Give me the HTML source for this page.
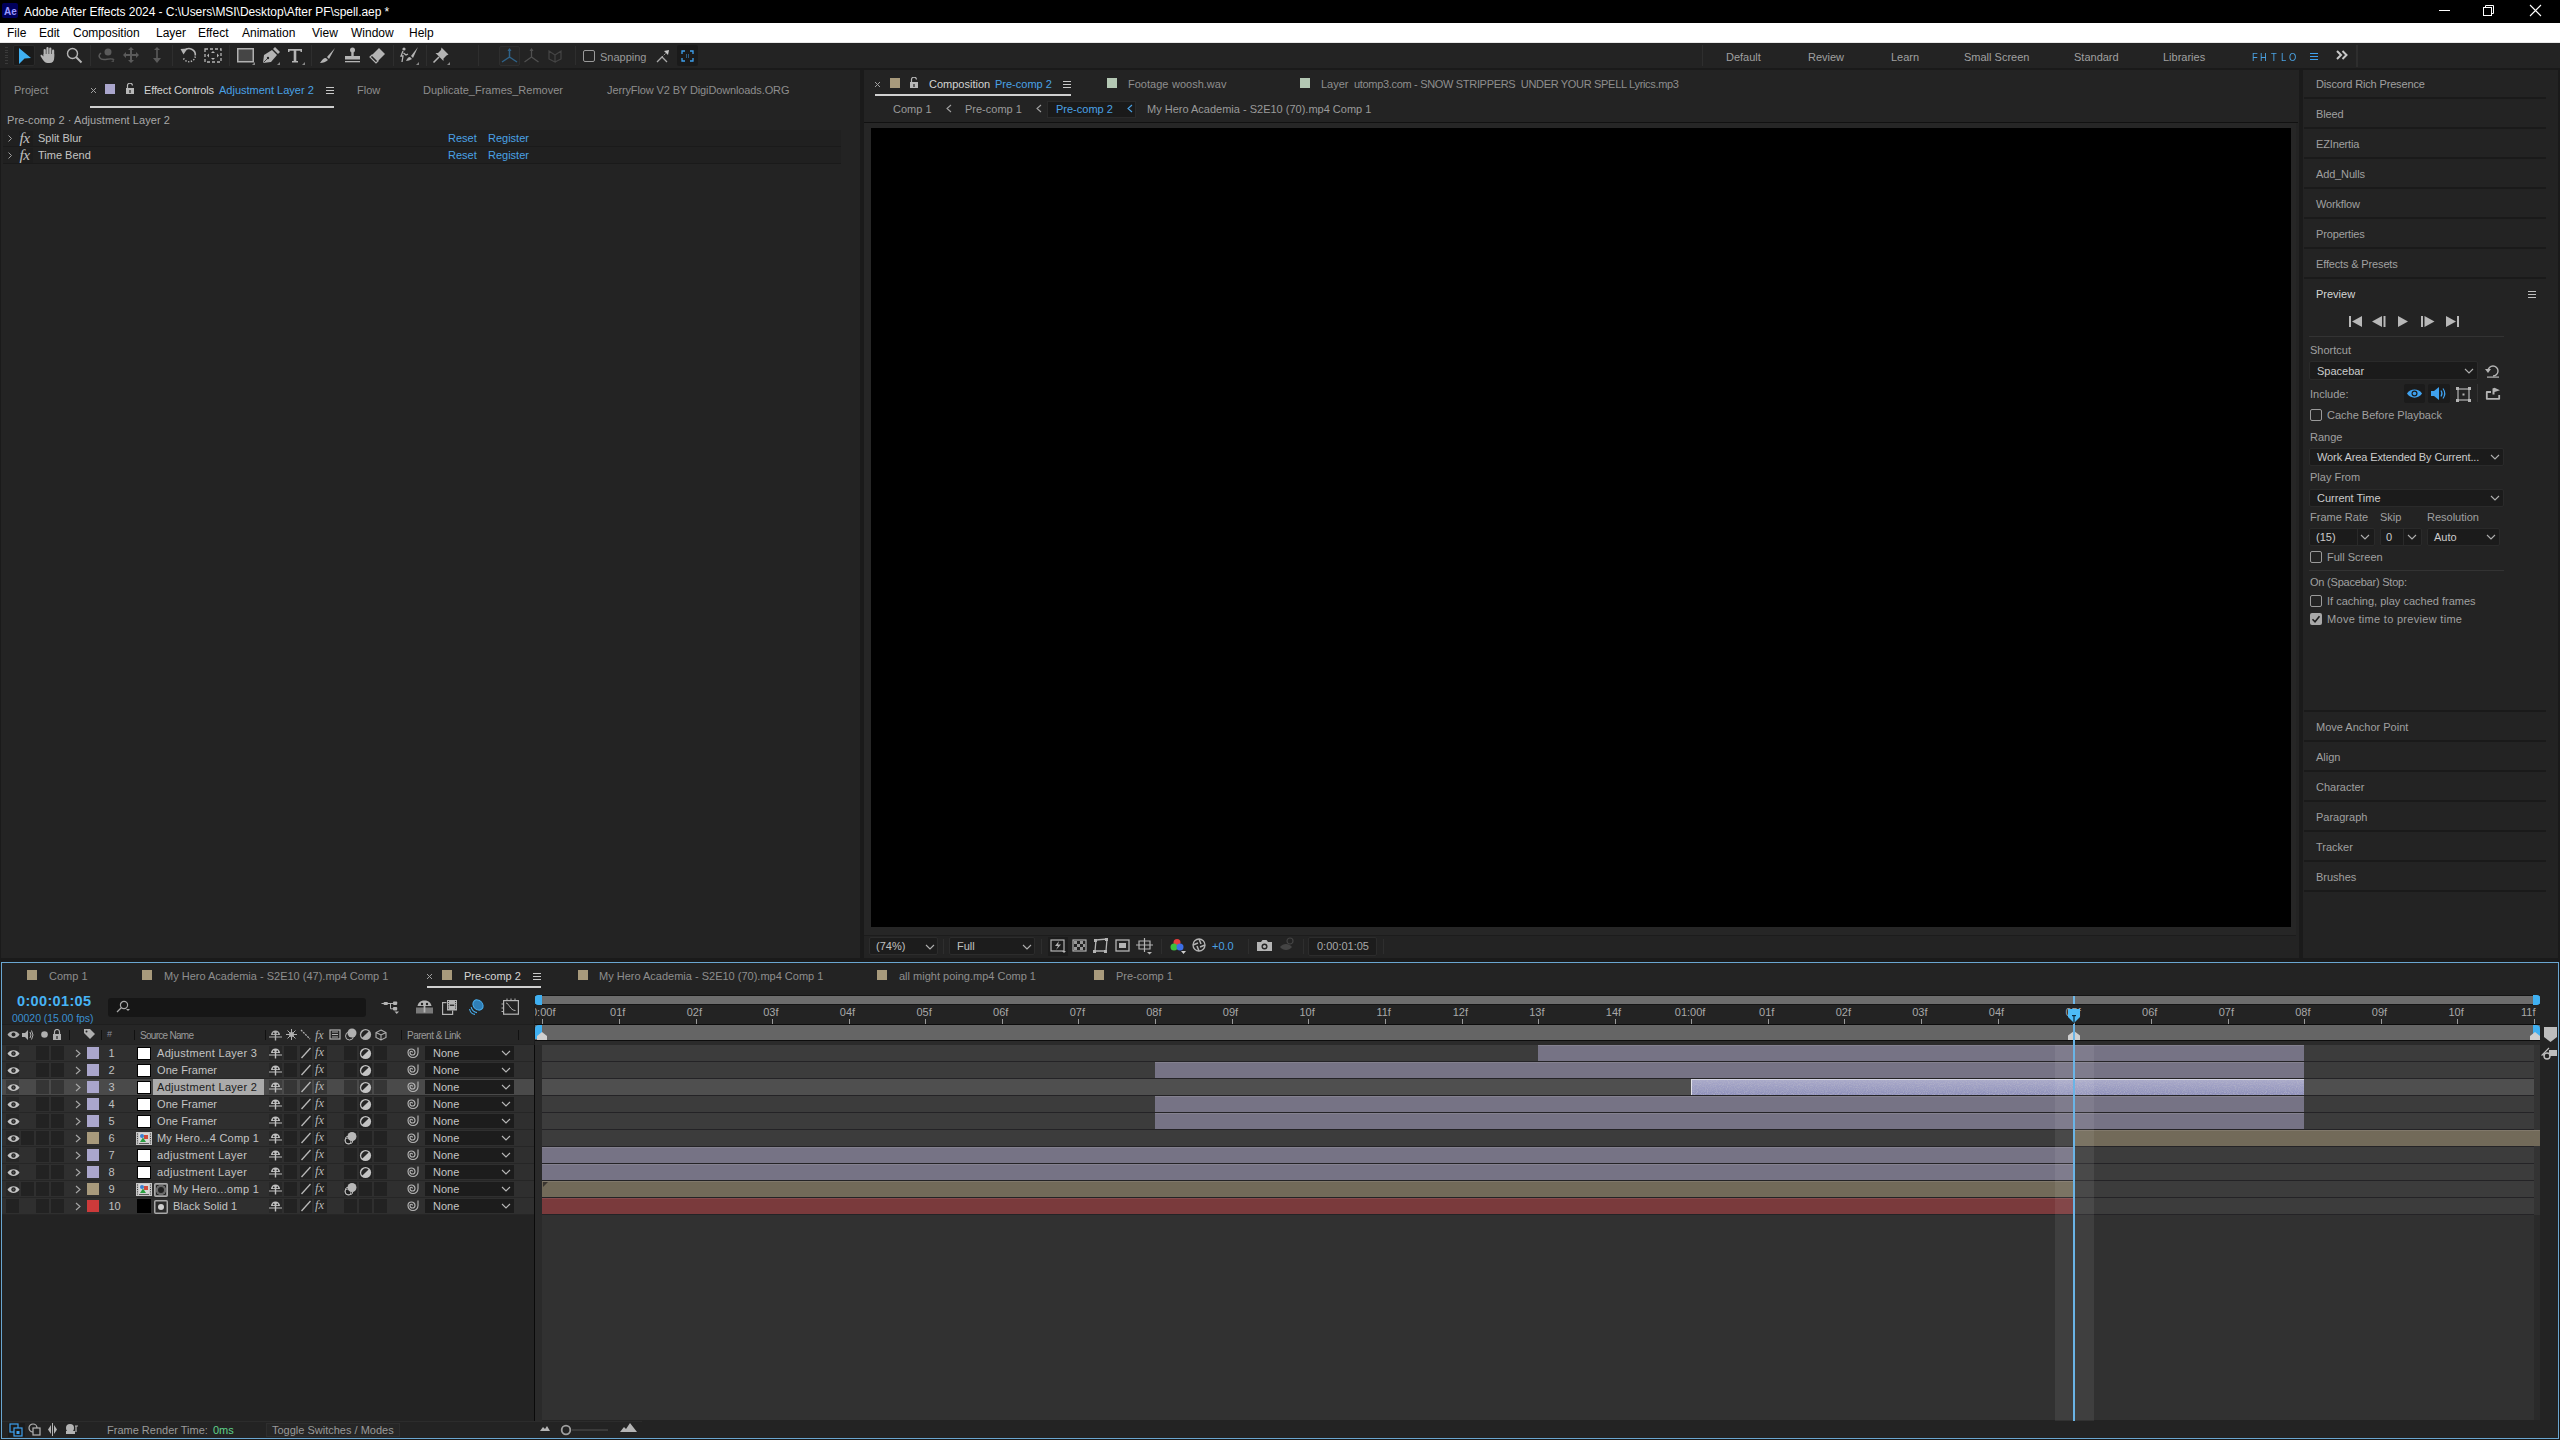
<!DOCTYPE html>
<html><head><meta charset="utf-8"><style>
html,body{margin:0;padding:0;width:2560px;height:1440px;overflow:hidden;background:#1a1a1a;}
body{position:relative;font-family:"Liberation Sans",sans-serif;}
div{position:absolute;box-sizing:border-box;}
.t{white-space:pre;}
</style></head><body>
<div style="left:0px;top:0px;width:2560px;height:1440px;background:#1a1a1a;"></div>
<div style="left:0px;top:0px;width:2560px;height:23px;background:#000;"></div>
<div style="left:2px;top:3px;width:16px;height:15px;background:#00005b;border-radius:2px;"></div>
<div class="t" style="left:4px;top:6.54px;font-size:10px;line-height:10px;color:#9999ff;font-weight:bold;">Ae</div>
<div class="t" style="left:24px;top:5.84px;font-size:12px;line-height:12px;color:#ffffff;font-weight:normal;letter-spacing:-0.05px;">Adobe After Effects 2024 - C:\Users\MSI\Desktop\After PF\spell.aep *</div>
<div style="left:2439px;top:10px;width:11px;height:1px;background:#fff;"></div>
<svg style="position:absolute;left:2482px;top:4px;" width="14" height="14" viewBox="0 0 14 14"><rect x="1.5" y="3.5" width="8" height="8" fill="none" stroke="#fff" stroke-width="1"/><path d="M3.5 3.5V1.5H11.5V9.5H9.5" fill="none" stroke="#fff" stroke-width="1"/></svg>
<svg style="position:absolute;left:2529px;top:4px;" width="14" height="14" viewBox="0 0 14 14"><path d="M1 1L12 12M12 1L1 12" stroke="#fff" stroke-width="1.1"/></svg>
<div style="left:0px;top:23px;width:2560px;height:20px;background:#ffffff;"></div>
<div style="left:0px;top:42px;width:2560px;height:1px;background:#e8e8e8;"></div>
<div class="t" style="left:7px;top:26.84px;font-size:12px;line-height:12px;color:#000000;font-weight:normal;">File</div>
<div class="t" style="left:39px;top:26.84px;font-size:12px;line-height:12px;color:#000000;font-weight:normal;">Edit</div>
<div class="t" style="left:73px;top:26.84px;font-size:12px;line-height:12px;color:#000000;font-weight:normal;">Composition</div>
<div class="t" style="left:156px;top:26.84px;font-size:12px;line-height:12px;color:#000000;font-weight:normal;">Layer</div>
<div class="t" style="left:198px;top:26.84px;font-size:12px;line-height:12px;color:#000000;font-weight:normal;">Effect</div>
<div class="t" style="left:242px;top:26.84px;font-size:12px;line-height:12px;color:#000000;font-weight:normal;">Animation</div>
<div class="t" style="left:312px;top:26.84px;font-size:12px;line-height:12px;color:#000000;font-weight:normal;">View</div>
<div class="t" style="left:351px;top:26.84px;font-size:12px;line-height:12px;color:#000000;font-weight:normal;">Window</div>
<div class="t" style="left:409px;top:26.84px;font-size:12px;line-height:12px;color:#000000;font-weight:normal;">Help</div>
<div style="left:0px;top:43px;width:2560px;height:25px;background:#232323;"></div>
<div style="left:0px;top:68px;width:2560px;height:2px;background:#1a1a1a;"></div>
<div style="left:5px;top:47.0px;width:3px;height:1px;background:#3a3a3a;"></div>
<div style="left:5px;top:49.6px;width:3px;height:1px;background:#3a3a3a;"></div>
<div style="left:5px;top:52.2px;width:3px;height:1px;background:#3a3a3a;"></div>
<div style="left:5px;top:54.8px;width:3px;height:1px;background:#3a3a3a;"></div>
<div style="left:5px;top:57.4px;width:3px;height:1px;background:#3a3a3a;"></div>
<div style="left:5px;top:60.0px;width:3px;height:1px;background:#3a3a3a;"></div>
<div style="left:5px;top:62.6px;width:3px;height:1px;background:#3a3a3a;"></div>
<div style="left:13px;top:45px;width:22px;height:21px;background:#1a1a1a;border:1px solid #2a2a2a;border-radius:2px;"></div>
<svg style="position:absolute;left:18px;top:47px;" width="14" height="18" viewBox="0 0 14 18"><path d="M1 1L13 11L6.5 11.6L1 17Z" fill="#3fb0f2"/></svg>
<svg style="position:absolute;left:40px;top:46px;" width="17" height="18" viewBox="0 0 17 18"><rect x="3.6" y="3" width="2.2" height="8" rx="1.1" fill="#b4b4b4"/><rect x="6.4" y="1" width="2.2" height="9" rx="1.1" fill="#b4b4b4"/><rect x="9.2" y="1.6" width="2.2" height="9" rx="1.1" fill="#b4b4b4"/><rect x="12" y="3.6" width="2.2" height="8" rx="1.1" fill="#b4b4b4"/><path d="M3.6 8H14.2V12C14.2 15 12.5 17 9.5 17H7.5C5.5 17 4.5 16 3 14L0.6 10.2C0.1 9.3 1.2 8.3 2.2 9.2L3.6 10.5Z" fill="#b4b4b4"/></svg>
<svg style="position:absolute;left:66px;top:47px;" width="17" height="17" viewBox="0 0 17 17"><circle cx="6.5" cy="6.5" r="5" fill="none" stroke="#b4b4b4" stroke-width="1.4"/><path d="M10 10L15.5 15.5" stroke="#b4b4b4" stroke-width="2"/></svg>
<div style="left:90px;top:45px;width:1px;height:21px;background:#2e2e2e;"></div>
<svg style="position:absolute;left:97px;top:47px;" width="19" height="17" viewBox="0 0 19 17"><circle cx="11" cy="5" r="3.5" fill="#5a5a5a"/><path d="M4 6C0 9 3 13 8 12.5C12 12 16 11 17 13" fill="none" stroke="#5a5a5a" stroke-width="1.4"/><path d="M14 15L17 15L17 12Z" fill="#4a4a4a"/></svg>
<svg style="position:absolute;left:123px;top:47px;" width="17" height="17" viewBox="0 0 17 17"><path d="M8 1V15M1 8H15" stroke="#5a5a5a" stroke-width="2"/><path d="M8 0L5 3H11ZM8 16L5 13H11ZM0 8L3 5V11ZM16 8L13 5V11Z" fill="#5a5a5a"/></svg>
<svg style="position:absolute;left:150px;top:47px;" width="14" height="17" viewBox="0 0 14 17"><path d="M7 2V14" stroke="#5a5a5a" stroke-width="1.6"/><path d="M7 0L4 3H10ZM7 16L3 11H11Z" fill="#5a5a5a"/></svg>
<div style="left:172px;top:45px;width:1px;height:21px;background:#2e2e2e;"></div>
<svg style="position:absolute;left:180px;top:46px;" width="18" height="18" viewBox="0 0 18 18"><path d="M4.5 4.5A6.3 6.3 0 0 1 15.3 9.5" fill="none" stroke="#b4b4b4" stroke-width="1.6"/><path d="M15.3 10.5A6.3 6.3 0 0 1 3 11" fill="none" stroke="#b4b4b4" stroke-width="1.5" stroke-dasharray="1.3 1.5"/><path d="M0.5 3L7.5 2.5L3.5 8.5Z" fill="#b4b4b4"/></svg>
<svg style="position:absolute;left:204px;top:48px;" width="18" height="15" viewBox="0 0 18 15"><rect x="1" y="1" width="16" height="13" fill="none" stroke="#b4b4b4" stroke-width="1.3" stroke-dasharray="3 2"/><path d="M9 3L7 5H11ZM9 12L7 10H11ZM3 7.5L5 5.5V9.5ZM15 7.5L13 5.5V9.5Z" fill="#b4b4b4"/></svg>
<div style="left:229px;top:45px;width:1px;height:21px;background:#2e2e2e;"></div>
<svg style="position:absolute;left:237px;top:48px;" width="19" height="17" viewBox="0 0 19 17"><rect x="0.75" y="0.75" width="15.5" height="13" fill="#454545" stroke="#b0b0b0" stroke-width="1.5"/><path d="M18 14L18 17L15 17Z" fill="#888"/></svg>
<svg style="position:absolute;left:262px;top:47px;" width="19" height="18" viewBox="0 0 19 18"><path d="M10 3L15 8L9 15L1 16L2 8Z" fill="#b4b4b4"/><path d="M11 2L13 0L18 5L16 7Z" fill="#b4b4b4"/><circle cx="6" cy="11" r="1.2" fill="#232323"/><path d="M1.5 15.5L6 11" stroke="#232323" stroke-width="0.8"/><path d="M18 15L18 18L15 18Z" fill="#888"/></svg>
<svg style="position:absolute;left:287px;top:48px;" width="19" height="17" viewBox="0 0 19 17"><path d="M1 1H15V4H13.5V2.8H9.3V13H11V14.5H5V13H6.7V2.8H2.5V4H1Z" fill="#b4b4b4"/><path d="M18 14L18 17L15 17Z" fill="#888"/></svg>
<div style="left:311px;top:45px;width:1px;height:21px;background:#2e2e2e;"></div>
<svg style="position:absolute;left:319px;top:47px;" width="17" height="17" viewBox="0 0 17 17"><path d="M16 1L8 10L10 12Z" fill="#b4b4b4"/><path d="M7 11C4 11 3 13 1 16C4 16 7 15 9 13Z" fill="#b4b4b4"/></svg>
<svg style="position:absolute;left:344px;top:47px;" width="17" height="16" viewBox="0 0 17 16"><circle cx="8.5" cy="3" r="2.5" fill="#b4b4b4"/><path d="M7.3 5H9.7V9H7.3Z" fill="#b4b4b4"/><path d="M1 9H16V12.5H1Z" fill="#b4b4b4"/><rect x="1" y="14" width="15" height="1.3" fill="#b4b4b4"/></svg>
<svg style="position:absolute;left:369px;top:47px;" width="17" height="17" viewBox="0 0 17 17"><path d="M10 1L16 7L9 14L3 8Z" fill="#b4b4b4"/><path d="M3 8L9 14L7 16L1 10Z" fill="none" stroke="#b4b4b4" stroke-width="1.2"/></svg>
<div style="left:393px;top:45px;width:1px;height:21px;background:#2e2e2e;"></div>
<svg style="position:absolute;left:399px;top:46px;" width="21" height="19" viewBox="0 0 21 19"><circle cx="5" cy="3" r="1.6" fill="#b4b4b4"/><path d="M4 5L2 10H4L3 16M4.5 7L7 9L9 8" fill="none" stroke="#b4b4b4" stroke-width="1.3"/><path d="M19 1L12 10L14 12Z" fill="#b4b4b4"/><path d="M11 11C9 11 8 13 7 15C9 15 11 14 13 13Z" fill="#b4b4b4"/><path d="M20 16L20 19L17 19Z" fill="#888"/></svg>
<div style="left:426px;top:45px;width:1px;height:21px;background:#2e2e2e;"></div>
<svg style="position:absolute;left:432px;top:46px;" width="19" height="19" viewBox="0 0 19 19"><path d="M9.5 1.5L16.5 8.5L14.5 9.5L11.5 12.5L11.5 15L3.5 7L6 7L9 4Z" fill="#b4b4b4"/><path d="M7 11L1.5 16.5" stroke="#b4b4b4" stroke-width="1.6"/><path d="M18 16L18 19L15 19Z" fill="#888"/></svg>
<div style="left:478px;top:45px;width:1px;height:21px;background:#2e2e2e;"></div>
<div style="left:499px;top:46px;width:21px;height:20px;background:#262626;border:1px solid #2e2e2e;border-radius:2px;"></div>
<svg style="position:absolute;left:500px;top:48px;" width="19" height="16" viewBox="0 0 19 16"><path d="M9.5 1V9L2 14M9.5 9L17 14" fill="none" stroke="#2f6288" stroke-width="1.5"/><path d="M9.5 0L7.5 3H11.5Z" fill="#2f6288"/></svg>
<svg style="position:absolute;left:523px;top:48px;" width="17" height="16" viewBox="0 0 17 16"><path d="M8.5 1V9L1.5 14M8.5 9L15.5 14" fill="none" stroke="#505050" stroke-width="1.3"/><path d="M8.5 0L6.5 3H10.5Z" fill="#505050"/></svg>
<svg style="position:absolute;left:548px;top:48px;" width="15" height="16" viewBox="0 0 15 16"><path d="M1 3L7 7V14L1 11ZM7 7L13 3V11L7 14" fill="none" stroke="#444" stroke-width="1.2"/></svg>
<div style="left:575px;top:46px;width:1px;height:19px;background:#2e2e2e;"></div>
<div style="left:583px;top:50px;width:12px;height:12px;background:transparent;border:1.5px solid #9a9a9a;border-radius:2px;"></div>
<div class="t" style="left:600px;top:51.69px;font-size:11px;line-height:11px;color:#9a9a9a;font-weight:normal;">Snapping</div>
<svg style="position:absolute;left:655px;top:49px;" width="15" height="14" viewBox="0 0 15 14"><path d="M2 13L7 8L12 13" fill="none" stroke="#a8a8a8" stroke-width="1.3"/><path d="M7 8L11 4" stroke="#a8a8a8" stroke-width="1" stroke-dasharray="1.5 1"/><path d="M14 1L9 2L13 6Z" fill="#c8c8c8"/></svg>
<div style="left:677px;top:45px;width:21px;height:21px;background:#1a1a1a;border-radius:2px;"></div>
<svg style="position:absolute;left:681px;top:50px;" width="13" height="12" viewBox="0 0 13 12"><path d="M1 4V1H4M9 1H12V4M12 8V11H9M4 11H1V8" fill="none" stroke="#3fa1ee" stroke-width="1.3"/><path d="M5 5H6M7 5H8M5 7H6M7 7H8" stroke="#3fa1ee" stroke-width="1"/></svg>
<div style="left:1702px;top:45px;width:1px;height:21px;background:#2e2e2e;"></div>
<div class="t" style="left:1726px;top:51.69px;font-size:11px;line-height:11px;color:#a0a0a0;font-weight:normal;">Default</div>
<div class="t" style="left:1808px;top:51.69px;font-size:11px;line-height:11px;color:#a0a0a0;font-weight:normal;">Review</div>
<div class="t" style="left:1891px;top:51.69px;font-size:11px;line-height:11px;color:#a0a0a0;font-weight:normal;">Learn</div>
<div class="t" style="left:1964px;top:51.69px;font-size:11px;line-height:11px;color:#a0a0a0;font-weight:normal;">Small Screen</div>
<div class="t" style="left:2074px;top:51.69px;font-size:11px;line-height:11px;color:#a0a0a0;font-weight:normal;">Standard</div>
<div class="t" style="left:2163px;top:51.69px;font-size:11px;line-height:11px;color:#a0a0a0;font-weight:normal;">Libraries</div>
<div class="t" style="left:2251.5px;top:51.69px;font-size:11px;line-height:11px;color:#4aa2e2;font-weight:normal;transform:scaleX(0.85);transform-origin:left;">F</div>
<div class="t" style="left:2260px;top:51.69px;font-size:11px;line-height:11px;color:#4aa2e2;font-weight:normal;transform:scaleX(0.85);transform-origin:left;">H</div>
<div class="t" style="left:2270.5px;top:51.69px;font-size:11px;line-height:11px;color:#4aa2e2;font-weight:normal;transform:scaleX(0.85);transform-origin:left;">T</div>
<div class="t" style="left:2280.5px;top:51.69px;font-size:11px;line-height:11px;color:#4aa2e2;font-weight:normal;transform:scaleX(0.85);transform-origin:left;">L</div>
<div class="t" style="left:2289px;top:51.69px;font-size:11px;line-height:11px;color:#4aa2e2;font-weight:normal;transform:scaleX(0.85);transform-origin:left;">O</div>
<div style="left:2310px;top:53px;width:8px;height:1px;background:#3fa1ee;"></div>
<div style="left:2310px;top:56px;width:8px;height:1px;background:#3fa1ee;"></div>
<div style="left:2310px;top:59px;width:8px;height:1px;background:#3fa1ee;"></div>
<svg style="position:absolute;left:2336px;top:50px;" width="13" height="10" viewBox="0 0 13 10"><path d="M1 1L5 5L1 9M6.5 1L10.5 5L6.5 9" fill="none" stroke="#c8c8c8" stroke-width="2"/></svg>
<div style="left:2356px;top:45px;width:2px;height:22px;background:#2e2e2e;"></div>
<div style="left:1px;top:70px;width:859px;height:888px;background:#232323;"></div>
<div class="t" style="left:14px;top:84.69px;font-size:11px;line-height:11px;color:#8e8e8e;font-weight:normal;">Project</div>
<svg style="position:absolute;left:90px;top:87px;" width="7" height="7" viewBox="0 0 7 7"><path d="M1 1L6 6M6 1L1 6" stroke="#a0a0a0" stroke-width="1"/></svg>
<div style="left:105px;top:84px;width:10px;height:10px;background:#aaa6cc;"></div>
<svg style="position:absolute;left:125px;top:83px;" width="10" height="11" viewBox="0 0 10 11"><path d="M2.5 5V3A2.5 2.5 0 0 1 7.5 2.5" fill="none" stroke="#b8b8b8" stroke-width="1.2"/><rect x="1" y="5" width="8" height="6" fill="#b8b8b8"/><rect x="4.4" y="7" width="1.2" height="3" fill="#232323"/></svg>
<div class="t" style="left:144px;top:84.69px;font-size:11px;line-height:11px;color:#d0d0d0;font-weight:normal;letter-spacing:-0.139px;">Effect Controls</div>
<div class="t" style="left:219px;top:84.69px;font-size:11px;line-height:11px;color:#4aa2e6;font-weight:normal;">Adjustment Layer 2</div>
<div style="left:326px;top:87px;width:8px;height:1px;background:#c8c8c8;"></div>
<div style="left:326px;top:90px;width:8px;height:1px;background:#c8c8c8;"></div>
<div style="left:326px;top:93px;width:8px;height:1px;background:#c8c8c8;"></div>
<div style="left:90px;top:106px;width:244px;height:2px;background:#cfcfcf;"></div>
<div class="t" style="left:357px;top:84.69px;font-size:11px;line-height:11px;color:#8e8e8e;font-weight:normal;">Flow</div>
<div class="t" style="left:423px;top:84.69px;font-size:11px;line-height:11px;color:#8e8e8e;font-weight:normal;">Duplicate_Frames_Remover</div>
<div class="t" style="left:607px;top:84.69px;font-size:11px;line-height:11px;color:#8e8e8e;font-weight:normal;letter-spacing:-0.117px;">JerryFlow V2 BY DigiDownloads.ORG</div>
<div class="t" style="left:7px;top:114.89px;font-size:11px;line-height:11px;color:#a8a8a8;font-weight:normal;letter-spacing:0.073px;">Pre-comp 2 · Adjustment Layer 2</div>
<div style="left:3px;top:130px;width:838px;height:16px;background:#202020;"></div>
<div style="left:3px;top:146px;width:838px;height:1px;background:#1a1a1a;"></div>
<svg style="position:absolute;left:7px;top:134px;" width="6" height="9" viewBox="0 0 6 9"><path d="M1.5 1.5L4.5 4.5L1.5 7.5" fill="none" stroke="#a0a0a0" stroke-width="1"/></svg>
<div style="left:19px;top:131px;width:14px;height:15px;background:#1d1d1d;"></div>
<div class="t" style="left:19.5px;top:130.38px;font-size:15.5px;line-height:15.5px;color:#c0c0c0;font-weight:normal;letter-spacing:-0.5px;font-family:'Liberation Serif',serif;font-style:italic;">fx</div>
<div class="t" style="left:38px;top:132.69px;font-size:11px;line-height:11px;color:#c4c4c4;font-weight:normal;">Split Blur</div>
<div class="t" style="left:448px;top:132.69px;font-size:11px;line-height:11px;color:#4aa2e6;font-weight:normal;">Reset</div>
<div class="t" style="left:488px;top:132.69px;font-size:11px;line-height:11px;color:#4aa2e6;font-weight:normal;">Register</div>
<div style="left:3px;top:147px;width:838px;height:16px;background:#202020;"></div>
<div style="left:3px;top:163px;width:838px;height:1px;background:#1a1a1a;"></div>
<svg style="position:absolute;left:7px;top:151px;" width="6" height="9" viewBox="0 0 6 9"><path d="M1.5 1.5L4.5 4.5L1.5 7.5" fill="none" stroke="#a0a0a0" stroke-width="1"/></svg>
<div style="left:19px;top:148px;width:14px;height:15px;background:#1d1d1d;"></div>
<div class="t" style="left:19.5px;top:147.38px;font-size:15.5px;line-height:15.5px;color:#c0c0c0;font-weight:normal;letter-spacing:-0.5px;font-family:'Liberation Serif',serif;font-style:italic;">fx</div>
<div class="t" style="left:38px;top:149.69px;font-size:11px;line-height:11px;color:#c4c4c4;font-weight:normal;">Time Bend</div>
<div class="t" style="left:448px;top:149.69px;font-size:11px;line-height:11px;color:#4aa2e6;font-weight:normal;">Reset</div>
<div class="t" style="left:488px;top:149.69px;font-size:11px;line-height:11px;color:#4aa2e6;font-weight:normal;">Register</div>
<div style="left:864px;top:70px;width:1435px;height:888px;background:#232323;"></div>
<svg style="position:absolute;left:874px;top:81px;" width="7" height="7" viewBox="0 0 7 7"><path d="M1 1L6 6M6 1L1 6" stroke="#a0a0a0" stroke-width="1"/></svg>
<div style="left:890px;top:78px;width:10px;height:10px;background:#a89a7c;"></div>
<svg style="position:absolute;left:909px;top:77px;" width="10" height="11" viewBox="0 0 10 11"><path d="M2.5 5V3A2.5 2.5 0 0 1 7.5 2.5" fill="none" stroke="#b8b8b8" stroke-width="1.2"/><rect x="1" y="5" width="8" height="6" fill="#b8b8b8"/><rect x="4.4" y="7" width="1.2" height="3" fill="#232323"/></svg>
<div class="t" style="left:929px;top:78.69px;font-size:11px;line-height:11px;color:#d4d4d4;font-weight:normal;">Composition</div>
<div class="t" style="left:995px;top:78.69px;font-size:11px;line-height:11px;color:#4aa2e6;font-weight:normal;">Pre-comp 2</div>
<div style="left:1063px;top:81px;width:8px;height:1px;background:#c8c8c8;"></div>
<div style="left:1063px;top:84px;width:8px;height:1px;background:#c8c8c8;"></div>
<div style="left:1063px;top:87px;width:8px;height:1px;background:#c8c8c8;"></div>
<div style="left:875px;top:94px;width:196px;height:2px;background:#d0d0d0;"></div>
<div style="left:1107px;top:78px;width:10px;height:10px;background:#b4c8b4;"></div>
<div class="t" style="left:1128px;top:78.69px;font-size:11px;line-height:11px;color:#8e8e8e;font-weight:normal;">Footage</div>
<div class="t" style="left:1172px;top:78.69px;font-size:11px;line-height:11px;color:#8e8e8e;font-weight:normal;">woosh.wav</div>
<div style="left:1300px;top:78px;width:10px;height:10px;background:#b4c8b4;"></div>
<div class="t" style="left:1321px;top:78.69px;font-size:11px;line-height:11px;color:#8e8e8e;font-weight:normal;">Layer</div>
<div class="t" style="left:1354px;top:78.69px;font-size:11px;line-height:11px;color:#8e8e8e;font-weight:normal;letter-spacing:-0.319px;">utomp3.com - SNOW STRIPPERS  UNDER YOUR SPELL Lyrics.mp3</div>
<div class="t" style="left:893px;top:103.69px;font-size:11px;line-height:11px;color:#9a9a9a;font-weight:normal;">Comp 1</div>
<svg style="position:absolute;left:946px;top:104px;" width="6" height="9" viewBox="0 0 6 9"><path d="M5 1L1 4.5L5 8" fill="none" stroke="#a0a0a0" stroke-width="1.1"/></svg>
<div class="t" style="left:965px;top:103.69px;font-size:11px;line-height:11px;color:#9a9a9a;font-weight:normal;">Pre-comp 1</div>
<svg style="position:absolute;left:1036px;top:104px;" width="6" height="9" viewBox="0 0 6 9"><path d="M5 1L1 4.5L5 8" fill="none" stroke="#a0a0a0" stroke-width="1.1"/></svg>
<div style="left:1047px;top:101px;width:89px;height:17px;background:#1a1a1a;border:1px solid #2a2a2a;"></div>
<div class="t" style="left:1056px;top:103.69px;font-size:11px;line-height:11px;color:#4aa2e6;font-weight:normal;">Pre-comp 2</div>
<svg style="position:absolute;left:1127px;top:104px;" width="6" height="9" viewBox="0 0 6 9"><path d="M5 1L1 4.5L5 8" fill="none" stroke="#4aa2e6" stroke-width="1.1"/></svg>
<div class="t" style="left:1147px;top:103.69px;font-size:11px;line-height:11px;color:#9a9a9a;font-weight:normal;">My Hero Academia - S2E10 (70).mp4 Comp 1</div>
<div style="left:864px;top:122px;width:1434px;height:1px;background:#111111;"></div>
<div style="left:864px;top:123px;width:1432px;height:812px;background:#262626;"></div>
<div style="left:864px;top:935px;width:1432px;height:1px;background:#1c1c1c;"></div>
<div style="left:871px;top:128px;width:1420px;height:799px;background:#000000;"></div>
<div style="left:869px;top:937px;width:69px;height:18px;background:#1c1c1c;border:1px solid #2c2c2c;border-radius:2px;"></div>
<div class="t" style="left:876px;top:941.19px;font-size:11px;line-height:11px;color:#c0c0c0;font-weight:normal;">(74%)</div>
<svg style="position:absolute;left:925px;top:944.0px;" width="10" height="6" viewBox="0 0 10 6"><path d="M1 1L5.0 5L9 1" fill="none" stroke="#b0b0b0" stroke-width="1.1"/></svg>
<div style="left:943px;top:939px;width:1px;height:15px;background:#2e2e2e;"></div>
<div style="left:949px;top:937px;width:86px;height:18px;background:#1c1c1c;border:1px solid #2c2c2c;border-radius:2px;"></div>
<div class="t" style="left:957px;top:941.19px;font-size:11px;line-height:11px;color:#c0c0c0;font-weight:normal;">Full</div>
<svg style="position:absolute;left:1022px;top:944.0px;" width="10" height="6" viewBox="0 0 10 6"><path d="M1 1L5.0 5L9 1" fill="none" stroke="#b0b0b0" stroke-width="1.1"/></svg>
<div style="left:1041px;top:939px;width:1px;height:15px;background:#2e2e2e;"></div>
<div style="left:1048px;top:937px;width:20px;height:19px;background:#1c1c1c;"></div>
<svg style="position:absolute;left:1050px;top:938px;" width="16" height="16" viewBox="0 0 16 16"><rect x="1" y="2" width="13" height="11" fill="none" stroke="#b4b4b4" stroke-width="1.2"/><path d="M9 3L5 8H8L6 12L11 6.5H8Z" fill="#b4b4b4"/><path d="M12 13H16L14 15Z" fill="#b4b4b4"/></svg>
<svg style="position:absolute;left:1072px;top:939px;" width="15" height="13" viewBox="0 0 15 13"><rect x="1" y="1" width="13" height="11" fill="none" stroke="#b0b0b0" stroke-width="1.2"/><path d="M2 2H5V5H2ZM8 2H11V5H8ZM5 5H8V8H5ZM11 5H13V8H11ZM2 8H5V11H2ZM8 8H11V11H8Z" fill="#999"/></svg>
<svg style="position:absolute;left:1093px;top:938px;" width="16" height="15" viewBox="0 0 16 15"><path d="M3 2L14 1L13 13H2Z" fill="none" stroke="#b4b4b4" stroke-width="1.3"/><rect x="1" y="1" width="3" height="3" fill="#b4b4b4"/><rect x="12" y="0" width="3" height="3" fill="#b4b4b4"/><rect x="11" y="12" width="3" height="3" fill="#b4b4b4"/><rect x="0" y="12" width="3" height="3" fill="#b4b4b4"/></svg>
<svg style="position:absolute;left:1115px;top:939px;" width="15" height="13" viewBox="0 0 15 13"><rect x="1" y="1" width="13" height="11" fill="none" stroke="#b4b4b4" stroke-width="1.3"/><rect x="4" y="4" width="7" height="5" fill="#b4b4b4"/></svg>
<svg style="position:absolute;left:1136px;top:938px;" width="17" height="17" viewBox="0 0 17 17"><path d="M3 3H14V11H3Z" fill="none" stroke="#b4b4b4" stroke-width="1.2"/><path d="M8.5 0V14M0 7H17" stroke="#b4b4b4" stroke-width="1.2"/><path d="M11 14H16L13.5 16.5Z" fill="#b4b4b4"/></svg>
<div style="left:1161px;top:939px;width:1px;height:15px;background:#2e2e2e;"></div>
<svg style="position:absolute;left:1169px;top:938px;" width="17" height="17" viewBox="0 0 17 17"><circle cx="8" cy="4.5" r="3.5" fill="#e63c3c"/><circle cx="5" cy="9" r="3.5" fill="#3cbe3c"/><circle cx="11" cy="9" r="3.5" fill="#3c6ee6"/><path d="M12 13H17L14.5 16Z" fill="#cfcfcf"/></svg>
<svg style="position:absolute;left:1192px;top:938px;" width="14" height="14" viewBox="0 0 14 14"><circle cx="7" cy="7" r="6" fill="none" stroke="#b4b4b4" stroke-width="1.3"/><path d="M7 1L9 6M13 7L8 9M7 13L5 8M1 7L6 5" stroke="#b4b4b4" stroke-width="1.5"/></svg>
<div class="t" style="left:1212px;top:940.69px;font-size:11px;line-height:11px;color:#4aa2e6;font-weight:normal;">+0.0</div>
<div style="left:1248px;top:939px;width:1px;height:15px;background:#2e2e2e;"></div>
<svg style="position:absolute;left:1256px;top:939px;" width="17" height="13" viewBox="0 0 17 13"><path d="M1 3H5L6.5 1H10.5L12 3H16V12H1Z" fill="#b4b4b4"/><circle cx="8.5" cy="7.5" r="3" fill="#232323"/><circle cx="8.5" cy="7.5" r="1.6" fill="#b4b4b4"/></svg>
<svg style="position:absolute;left:1279px;top:937px;" width="17" height="16" viewBox="0 0 17 16"><circle cx="11" cy="4" r="3" fill="none" stroke="#444" stroke-width="1.2"/><path d="M1 10C4 6 10 6 13 10C10 14 4 14 1 10Z" fill="#444"/></svg>
<div style="left:1303px;top:939px;width:1px;height:15px;background:#2e2e2e;"></div>
<div style="left:1308px;top:937px;width:69px;height:19px;background:#1c1c1c;border:1px solid #2c2c2c;border-radius:2px;"></div>
<div class="t" style="left:1317px;top:940.69px;font-size:11px;line-height:11px;color:#a8a8a8;font-weight:normal;">0:00:01:05</div>
<div style="left:1383px;top:939px;width:1px;height:15px;background:#2e2e2e;"></div>
<div style="left:2303px;top:70px;width:255px;height:888px;background:#232323;"></div>
<div class="t" style="left:2316px;top:78.69px;font-size:11px;line-height:11px;color:#a0a0a0;font-weight:normal;letter-spacing:-0.15px;">Discord Rich Presence</div>
<div style="left:2304px;top:97px;width:242px;height:2px;background:#1a1a1a;"></div>
<div class="t" style="left:2316px;top:108.69px;font-size:11px;line-height:11px;color:#a0a0a0;font-weight:normal;letter-spacing:-0.15px;">Bleed</div>
<div style="left:2304px;top:127px;width:242px;height:2px;background:#1a1a1a;"></div>
<div class="t" style="left:2316px;top:138.69px;font-size:11px;line-height:11px;color:#a0a0a0;font-weight:normal;letter-spacing:-0.15px;">EZInertia</div>
<div style="left:2304px;top:157px;width:242px;height:2px;background:#1a1a1a;"></div>
<div class="t" style="left:2316px;top:168.69px;font-size:11px;line-height:11px;color:#a0a0a0;font-weight:normal;letter-spacing:-0.15px;">Add_Nulls</div>
<div style="left:2304px;top:187px;width:242px;height:2px;background:#1a1a1a;"></div>
<div class="t" style="left:2316px;top:198.69px;font-size:11px;line-height:11px;color:#a0a0a0;font-weight:normal;letter-spacing:-0.15px;">Workflow</div>
<div style="left:2304px;top:217px;width:242px;height:2px;background:#1a1a1a;"></div>
<div class="t" style="left:2316px;top:228.69px;font-size:11px;line-height:11px;color:#a0a0a0;font-weight:normal;letter-spacing:-0.15px;">Properties</div>
<div style="left:2304px;top:247px;width:242px;height:2px;background:#1a1a1a;"></div>
<div class="t" style="left:2316px;top:258.69px;font-size:11px;line-height:11px;color:#a0a0a0;font-weight:normal;letter-spacing:-0.15px;">Effects &amp; Presets</div>
<div style="left:2304px;top:277px;width:242px;height:2px;background:#1a1a1a;"></div>
<div class="t" style="left:2316px;top:288.69px;font-size:11px;line-height:11px;color:#d6d6d6;font-weight:normal;">Preview</div>
<div style="left:2528px;top:291px;width:8px;height:1px;background:#c0c0c0;"></div>
<div style="left:2528px;top:294px;width:8px;height:1px;background:#c0c0c0;"></div>
<div style="left:2528px;top:297px;width:8px;height:1px;background:#c0c0c0;"></div>
<svg style="position:absolute;left:2349px;top:316px;" width="14" height="11" viewBox="0 0 14 11"><rect x="0" y="0" width="2" height="11" fill="#b8b8b8"/><path d="M13 0V11L3 5.5Z" fill="#b8b8b8"/></svg>
<svg style="position:absolute;left:2372px;top:316px;" width="14" height="11" viewBox="0 0 14 11"><path d="M10 0V11L0 5.5Z" fill="#b8b8b8"/><rect x="11.5" y="0" width="2" height="11" fill="#b8b8b8"/></svg>
<svg style="position:absolute;left:2398px;top:316px;" width="11" height="11" viewBox="0 0 11 11"><path d="M0 0V11L10 5.5Z" fill="#b8b8b8"/></svg>
<svg style="position:absolute;left:2421px;top:316px;" width="14" height="11" viewBox="0 0 14 11"><rect x="0" y="0" width="2" height="11" fill="#b8b8b8"/><path d="M3.5 0V11L13.5 5.5Z" fill="#b8b8b8"/></svg>
<svg style="position:absolute;left:2446px;top:316px;" width="14" height="11" viewBox="0 0 14 11"><path d="M0 0V11L10 5.5Z" fill="#b8b8b8"/><rect x="11" y="0" width="2" height="11" fill="#b8b8b8"/></svg>
<div style="left:2309px;top:336px;width:195px;height:1px;background:#333333;"></div>
<div class="t" style="left:2310px;top:344.69px;font-size:11px;line-height:11px;color:#a0a0a0;font-weight:normal;">Shortcut</div>
<div style="left:2309px;top:361px;width:169px;height:19px;background:#1b1b1b;border:1px solid #2a2a2a;border-radius:2px;"></div>
<div class="t" style="left:2317px;top:365.69px;font-size:11px;line-height:11px;color:#cccccc;font-weight:normal;">Spacebar</div>
<svg style="position:absolute;left:2464px;top:368px;" width="10" height="6" viewBox="0 0 10 6"><path d="M1 1L5.0 5L9 1" fill="none" stroke="#b0b0b0" stroke-width="1.1"/></svg>
<svg style="position:absolute;left:2485px;top:364px;" width="16" height="14" viewBox="0 0 16 14"><path d="M3 7A5 5 0 1 1 8 12" fill="none" stroke="#b4b4b4" stroke-width="1.4"/><path d="M0 5H6L3 9Z" fill="#b4b4b4" transform="rotate(0)"/><rect x="2" y="12.5" width="12" height="1.2" fill="#b4b4b4"/></svg>
<div class="t" style="left:2310px;top:388.69px;font-size:11px;line-height:11px;color:#a0a0a0;font-weight:normal;">Include:</div>
<div style="left:2404px;top:384px;width:21px;height:19px;background:#1b1b1b;border-radius:2px;"></div>
<svg style="position:absolute;left:2406px;top:388px;" width="17" height="11" viewBox="0 0 17 11"><path d="M1 5.5C4 0 13 0 16 5.5C13 11 4 11 1 5.5Z" fill="#3fa1ee"/><circle cx="8.5" cy="5.5" r="3" fill="#1b1b1b"/><circle cx="8.5" cy="5.5" r="1.8" fill="#3fa1ee"/></svg>
<div style="left:2428px;top:384px;width:22px;height:19px;background:#1b1b1b;border-radius:2px;"></div>
<svg style="position:absolute;left:2430px;top:386px;" width="18" height="15" viewBox="0 0 18 15"><path d="M1 5H4L9 1V14L4 10H1Z" fill="#3fa1ee"/><path d="M11 4.5Q13 7.5 11 10.5M13 2.5Q16.5 7.5 13 12.5" fill="none" stroke="#3fa1ee" stroke-width="1.2"/></svg>
<svg style="position:absolute;left:2456px;top:387px;" width="15" height="15" viewBox="0 0 15 15"><rect x="2" y="2" width="11" height="11" fill="none" stroke="#b4b4b4" stroke-width="1.2"/><rect x="0" y="0" width="3" height="3" fill="#b4b4b4"/><rect x="12" y="0" width="3" height="3" fill="#b4b4b4"/><rect x="0" y="12" width="3" height="3" fill="#b4b4b4"/><rect x="12" y="12" width="3" height="3" fill="#b4b4b4"/><rect x="6.5" y="6.5" width="2" height="2" fill="#b4b4b4"/></svg>
<div style="left:2477px;top:384px;width:1px;height:18px;background:#333;"></div>
<svg style="position:absolute;left:2485px;top:387px;" width="16" height="13" viewBox="0 0 16 13"><path d="M6 5H1.8V11.8H14.2V8" fill="none" stroke="#b4b4b4" stroke-width="1.8" stroke-linejoin="round"/><path d="M7.5 1.5V7.5H9.5V5L15 3.2L9.5 0.8Z" fill="#b4b4b4"/></svg>
<div style="left:2310px;top:409px;width:12px;height:12px;background:transparent;border:1.5px solid #9a9a9a;border-radius:2px;"></div>
<div class="t" style="left:2327px;top:409.69px;font-size:11px;line-height:11px;color:#a0a0a0;font-weight:normal;">Cache Before Playback</div>
<div class="t" style="left:2310px;top:431.69px;font-size:11px;line-height:11px;color:#a0a0a0;font-weight:normal;">Range</div>
<div style="left:2309px;top:448px;width:195px;height:18px;background:#1b1b1b;border:1px solid #2a2a2a;border-radius:2px;"></div>
<div class="t" style="left:2317px;top:451.69px;font-size:11px;line-height:11px;color:#cccccc;font-weight:normal;letter-spacing:-0.1px;">Work Area Extended By Current...</div>
<svg style="position:absolute;left:2490px;top:454px;" width="10" height="6" viewBox="0 0 10 6"><path d="M1 1L5.0 5L9 1" fill="none" stroke="#b0b0b0" stroke-width="1.1"/></svg>
<div class="t" style="left:2310px;top:471.69px;font-size:11px;line-height:11px;color:#a0a0a0;font-weight:normal;">Play From</div>
<div style="left:2309px;top:489px;width:195px;height:18px;background:#1b1b1b;border:1px solid #2a2a2a;border-radius:2px;"></div>
<div class="t" style="left:2317px;top:492.69px;font-size:11px;line-height:11px;color:#cccccc;font-weight:normal;">Current Time</div>
<svg style="position:absolute;left:2490px;top:495px;" width="10" height="6" viewBox="0 0 10 6"><path d="M1 1L5.0 5L9 1" fill="none" stroke="#b0b0b0" stroke-width="1.1"/></svg>
<div class="t" style="left:2310px;top:511.69px;font-size:11px;line-height:11px;color:#a0a0a0;font-weight:normal;">Frame Rate</div>
<div class="t" style="left:2380px;top:511.69px;font-size:11px;line-height:11px;color:#a0a0a0;font-weight:normal;">Skip</div>
<div class="t" style="left:2427px;top:511.69px;font-size:11px;line-height:11px;color:#a0a0a0;font-weight:normal;">Resolution</div>
<div style="left:2309px;top:528px;width:66px;height:18px;background:#1b1b1b;border:1px solid #2a2a2a;border-radius:2px;"></div>
<div style="left:2357px;top:529px;width:1px;height:16px;background:#2a2a2a;"></div>
<div class="t" style="left:2316px;top:531.69px;font-size:11px;line-height:11px;color:#cccccc;font-weight:normal;">(15)</div>
<svg style="position:absolute;left:2360px;top:534px;" width="10" height="6" viewBox="0 0 10 6"><path d="M1 1L5.0 5L9 1" fill="none" stroke="#b0b0b0" stroke-width="1.1"/></svg>
<div style="left:2380px;top:528px;width:42px;height:18px;background:#1b1b1b;border:1px solid #2a2a2a;border-radius:2px;"></div>
<div style="left:2403px;top:529px;width:1px;height:16px;background:#2a2a2a;"></div>
<div class="t" style="left:2386px;top:531.69px;font-size:11px;line-height:11px;color:#cccccc;font-weight:normal;">0</div>
<svg style="position:absolute;left:2407px;top:534px;" width="10" height="6" viewBox="0 0 10 6"><path d="M1 1L5.0 5L9 1" fill="none" stroke="#b0b0b0" stroke-width="1.1"/></svg>
<div style="left:2427px;top:528px;width:73px;height:18px;background:#1b1b1b;border:1px solid #2a2a2a;border-radius:2px;"></div>
<div class="t" style="left:2434px;top:531.69px;font-size:11px;line-height:11px;color:#cccccc;font-weight:normal;">Auto</div>
<svg style="position:absolute;left:2486px;top:534px;" width="10" height="6" viewBox="0 0 10 6"><path d="M1 1L5.0 5L9 1" fill="none" stroke="#b0b0b0" stroke-width="1.1"/></svg>
<div style="left:2310px;top:551px;width:12px;height:12px;background:transparent;border:1.5px solid #9a9a9a;border-radius:2px;"></div>
<div class="t" style="left:2327px;top:551.69px;font-size:11px;line-height:11px;color:#a0a0a0;font-weight:normal;">Full Screen</div>
<div style="left:2309px;top:570px;width:195px;height:1px;background:#333333;"></div>
<div class="t" style="left:2310px;top:576.69px;font-size:11px;line-height:11px;color:#a0a0a0;font-weight:normal;letter-spacing:-0.216px;">On (Spacebar) Stop:</div>
<div style="left:2310px;top:595px;width:12px;height:12px;background:transparent;border:1.5px solid #9a9a9a;border-radius:2px;"></div>
<div class="t" style="left:2327px;top:595.69px;font-size:11px;line-height:11px;color:#a0a0a0;font-weight:normal;">If caching, play cached frames</div>
<div style="left:2310px;top:613px;width:12px;height:12px;background:#a8a8a8;border-radius:2px;"></div>
<svg style="position:absolute;left:2310px;top:613px;" width="12" height="12" viewBox="0 0 12 12"><path d="M2.5 6.2L5 8.7L9.5 3.2" fill="none" stroke="#1e1e1e" stroke-width="1.6"/></svg>
<div class="t" style="left:2327px;top:613.69px;font-size:11px;line-height:11px;color:#a0a0a0;font-weight:normal;letter-spacing:0.301px;">Move time to preview time</div>
<div style="left:2304px;top:710px;width:242px;height:2px;background:#1a1a1a;"></div>
<div class="t" style="left:2316px;top:721.69px;font-size:11px;line-height:11px;color:#a0a0a0;font-weight:normal;">Move Anchor Point</div>
<div style="left:2304px;top:740px;width:242px;height:2px;background:#1a1a1a;"></div>
<div class="t" style="left:2316px;top:751.69px;font-size:11px;line-height:11px;color:#a0a0a0;font-weight:normal;">Align</div>
<div style="left:2304px;top:770px;width:242px;height:2px;background:#1a1a1a;"></div>
<div class="t" style="left:2316px;top:781.69px;font-size:11px;line-height:11px;color:#a0a0a0;font-weight:normal;">Character</div>
<div style="left:2304px;top:800px;width:242px;height:2px;background:#1a1a1a;"></div>
<div class="t" style="left:2316px;top:811.69px;font-size:11px;line-height:11px;color:#a0a0a0;font-weight:normal;">Paragraph</div>
<div style="left:2304px;top:830px;width:242px;height:2px;background:#1a1a1a;"></div>
<div class="t" style="left:2316px;top:841.69px;font-size:11px;line-height:11px;color:#a0a0a0;font-weight:normal;">Tracker</div>
<div style="left:2304px;top:860px;width:242px;height:2px;background:#1a1a1a;"></div>
<div class="t" style="left:2316px;top:871.69px;font-size:11px;line-height:11px;color:#a0a0a0;font-weight:normal;">Brushes</div>
<div style="left:2304px;top:890px;width:242px;height:2px;background:#1a1a1a;"></div>
<div style="left:0px;top:958px;width:2560px;height:482px;background:#1a1a1a;"></div>
<div style="left:1px;top:962px;width:2558px;height:477px;background:#232323;border:1px solid #6aa6d0;"></div>
<div style="left:27px;top:970px;width:10px;height:10px;background:#a89a7c;"></div>
<div class="t" style="left:49px;top:970.69px;font-size:11px;line-height:11px;color:#8e8e8e;font-weight:normal;">Comp 1</div>
<div style="left:142px;top:970px;width:10px;height:10px;background:#a89a7c;"></div>
<div class="t" style="left:164px;top:970.69px;font-size:11px;line-height:11px;color:#8e8e8e;font-weight:normal;">My Hero Academia - S2E10 (47).mp4 Comp 1</div>
<div style="left:442px;top:970px;width:10px;height:10px;background:#a89a7c;"></div>
<div class="t" style="left:464px;top:970.69px;font-size:11px;line-height:11px;color:#d4d4d4;font-weight:normal;">Pre-comp 2</div>
<div style="left:578px;top:970px;width:10px;height:10px;background:#a89a7c;"></div>
<div class="t" style="left:599px;top:970.69px;font-size:11px;line-height:11px;color:#8e8e8e;font-weight:normal;">My Hero Academia - S2E10 (70).mp4 Comp 1</div>
<div style="left:877px;top:970px;width:10px;height:10px;background:#a89a7c;"></div>
<div class="t" style="left:899px;top:970.69px;font-size:11px;line-height:11px;color:#8e8e8e;font-weight:normal;">all might poing.mp4 Comp 1</div>
<div style="left:1094px;top:970px;width:10px;height:10px;background:#a89a7c;"></div>
<div class="t" style="left:1116px;top:970.69px;font-size:11px;line-height:11px;color:#8e8e8e;font-weight:normal;">Pre-comp 1</div>
<svg style="position:absolute;left:426px;top:973px;" width="7" height="7" viewBox="0 0 7 7"><path d="M1 1L6 6M6 1L1 6" stroke="#a0a0a0" stroke-width="1"/></svg>
<div style="left:533px;top:973px;width:8px;height:1px;background:#c8c8c8;"></div>
<div style="left:533px;top:976px;width:8px;height:1px;background:#c8c8c8;"></div>
<div style="left:533px;top:979px;width:8px;height:1px;background:#c8c8c8;"></div>
<div style="left:427px;top:986px;width:114px;height:2px;background:#d0d0d0;"></div>
<div class="t" style="left:17px;top:994.23px;font-size:14.5px;line-height:14.5px;color:#47b3f5;font-weight:bold;letter-spacing:0.35px;">0:00:01:05</div>
<div class="t" style="left:12px;top:1012.61px;font-size:10.5px;line-height:10.5px;color:#3a8fd0;font-weight:normal;letter-spacing:-0.05px;">00020 (15.00 fps)</div>
<div style="left:108px;top:998px;width:258px;height:19px;background:#161616;border-radius:3px;"></div>
<svg style="position:absolute;left:116px;top:1000px;" width="16" height="14" viewBox="0 0 16 14"><circle cx="8" cy="5" r="3.6" fill="none" stroke="#a8a8a8" stroke-width="1.2"/><path d="M5.5 7.5L1 12" stroke="#a8a8a8" stroke-width="1.2"/><path d="M10 9H14L12 11Z" fill="#a8a8a8"/></svg>
<svg style="position:absolute;left:381px;top:1001px;" width="19" height="14" viewBox="0 0 19 14"><rect x="2.5" y="1" width="4.5" height="3" rx="1.2" fill="#b4b4b4"/><path d="M0.5 2.5H12M7.5 2.5H9.5V7.8H12" fill="none" stroke="#b4b4b4" stroke-width="1"/><rect x="12" y="0.5" width="4.2" height="3.4" rx="0.8" fill="#b4b4b4"/><rect x="12" y="6" width="4.2" height="3.4" rx="0.8" fill="#b4b4b4"/><path d="M13.5 10.5H18L15.75 13Z" fill="#b4b4b4"/></svg>
<svg style="position:absolute;left:416px;top:1000px;" width="17" height="14" viewBox="0 0 17 14"><path d="M1.5 6H15.5C15 3 13 0.5 8.5 0.5C4 0.5 2 3 1.5 6Z" fill="#b4b4b4"/><circle cx="6" cy="4" r="1.2" fill="#232323"/><circle cx="11" cy="4" r="1.2" fill="#232323"/><rect x="0" y="7.5" width="17" height="6" fill="#7a7a7a"/><rect x="7.6" y="5" width="1.8" height="7.5" fill="#b4b4b4"/></svg>
<svg style="position:absolute;left:442px;top:999px;" width="16" height="16" viewBox="0 0 16 16"><rect x="0.6" y="3.6" width="10" height="11.8" fill="none" stroke="#b4b4b4" stroke-width="1.2"/><rect x="4.5" y="0.5" width="11" height="11" fill="#232323"/><rect x="5" y="1" width="10" height="10.5" fill="#b4b4b4"/><path d="M6.5 2V10.5M13.5 2V10.5" stroke="#232323" stroke-width="0.9" stroke-dasharray="1 1.2"/><rect x="7.8" y="5.6" width="4.4" height="1.3" fill="#232323"/><path d="M2.2 5V14" stroke="#232323" stroke-width="0.9" stroke-dasharray="1 1.2"/></svg>
<svg style="position:absolute;left:468px;top:999px;" width="16" height="16" viewBox="0 0 16 16"><ellipse cx="10" cy="6" rx="4.6" ry="5.6" transform="rotate(-45 10 6)" fill="#2f7fb8" stroke="#4ab0f0" stroke-width="1"/><path d="M3.2 8.2A4.6 5.6 -45 0 0 9 13.6M1.6 10A4.6 5.6 -45 0 0 7 15.4" fill="none" stroke="#4ab0f0" stroke-width="1.1"/></svg>
<svg style="position:absolute;left:501px;top:998px;" width="18" height="17" viewBox="0 0 18 17"><rect x="2.6" y="2.6" width="14.8" height="13.6" fill="none" stroke="#b4b4b4" stroke-width="1.2"/><path d="M6 0.5V2.5M10 0.5V2.5M14 0.5V2.5M0.5 6H2.5M0.5 10H2.5M0.5 13.5H2.5" stroke="#b4b4b4" stroke-width="1"/><path d="M5 5C8 5 9 12.5 14.5 12.5" fill="none" stroke="#b4b4b4" stroke-width="1"/></svg>
<div style="left:2px;top:1024px;width:532px;height:1px;background:#1e1e1e;"></div>
<div style="left:2px;top:1025px;width:532px;height:19px;background:#262626;"></div>
<svg style="position:absolute;left:7px;top:1030px;" width="13" height="9" viewBox="0 0 13 9"><path d="M0.5 4.5C3 0 10 0 12.5 4.5C10 9 3 9 0.5 4.5Z" fill="#b0b0b0"/><circle cx="6.5" cy="4.5" r="2" fill="#232323"/></svg>
<svg style="position:absolute;left:22px;top:1029px;" width="12" height="12" viewBox="0 0 12 12"><path d="M0 4H3L6 1V11L3 8H0Z" fill="#b0b0b0"/><path d="M8 3Q10 6 8 9M9.5 1.5Q12.5 6 9.5 10.5" fill="none" stroke="#b0b0b0" stroke-width="1"/></svg>
<svg style="position:absolute;left:41px;top:1031px;" width="7" height="7" viewBox="0 0 7 7"><circle cx="3.5" cy="3.5" r="3.3" fill="#b0b0b0"/></svg>
<svg style="position:absolute;left:52px;top:1029px;" width="10" height="11" viewBox="0 0 10 11"><path d="M2.5 5V3A2.5 2.5 0 0 1 7.5 3V5" fill="none" stroke="#b0b0b0" stroke-width="1.2"/><rect x="1" y="5" width="8" height="6" fill="#b0b0b0"/><rect x="4.4" y="7" width="1.2" height="3" fill="#232323"/></svg>
<div style="left:69px;top:1030px;width:1px;height:10px;background:#111;"></div>
<svg style="position:absolute;left:83px;top:1028px;" width="13" height="13" viewBox="0 0 13 13"><path d="M1 1H7L12 6L7 11L1 5Z" fill="#b0b0b0" transform="rotate(0)"/><circle cx="3.5" cy="3.5" r="1" fill="#232323"/></svg>
<div style="left:101px;top:1030px;width:1px;height:10px;background:#111;"></div>
<div class="t" style="left:107px;top:1030.38px;font-size:9px;line-height:9px;color:#8a8a9a;font-weight:normal;">#</div>
<div style="left:134px;top:1030px;width:1px;height:10px;background:#111;"></div>
<div class="t" style="left:140px;top:1030.54px;font-size:10px;line-height:10px;color:#9a9a9a;font-weight:normal;letter-spacing:-0.714px;">Source Name</div>
<div style="left:265px;top:1030px;width:1px;height:10px;background:#111;"></div>
<svg style="position:absolute;left:269px;top:1029px;" width="13" height="12" viewBox="0 0 13 12"><path d="M2 6A4.5 4.5 0 0 1 11 6Z" fill="#b0b0b0"/><circle cx="4.7" cy="4.3" r="0.9" fill="#232323"/><circle cx="8.3" cy="4.3" r="0.9" fill="#232323"/><rect x="5.8" y="5.5" width="1.4" height="6" fill="#b0b0b0"/><rect x="0" y="7.5" width="13" height="1" fill="#b0b0b0"/></svg>
<svg style="position:absolute;left:286px;top:1029px;" width="11" height="11" viewBox="0 0 11 11"><circle cx="5.5" cy="5.5" r="2.5" fill="#b0b0b0"/><path d="M5.5 0V11M0 5.5H11M1.5 1.5L9.5 9.5M9.5 1.5L1.5 9.5" stroke="#b0b0b0" stroke-width="1"/></svg>
<svg style="position:absolute;left:300px;top:1029px;" width="11" height="11" viewBox="0 0 11 11"><path d="M1 1L10 10" stroke="#b0b0b0" stroke-width="1.3" stroke-dasharray="2 1"/></svg>
<div class="t" style="left:315px;top:1028.84px;font-size:12px;line-height:12px;color:#b0b0b0;font-weight:normal;font-family:'Liberation Serif',serif;font-style:italic;">fx</div>
<svg style="position:absolute;left:329px;top:1029px;" width="12" height="11" viewBox="0 0 12 11"><rect x="1" y="1" width="10" height="9" fill="none" stroke="#b0b0b0" stroke-width="1.2"/><path d="M3 3H9M3 5.5H9M3 8H9" stroke="#b0b0b0" stroke-width="1"/></svg>
<svg style="position:absolute;left:344px;top:1028px;" width="14" height="13" viewBox="0 0 14 13"><circle cx="8" cy="5" r="4.5" fill="#b0b0b0"/><circle cx="5.5" cy="8" r="4" fill="none" stroke="#b0b0b0" stroke-width="1"/></svg>
<svg style="position:absolute;left:359px;top:1028px;" width="13" height="13" viewBox="0 0 13 13"><circle cx="6.5" cy="6.5" r="5.6" fill="#b0b0b0"/><path d="M9.6 3.4L3.4 9.6A4.4 4.4 0 0 1 9.6 3.4Z" fill="#232323"/></svg>
<svg style="position:absolute;left:375px;top:1029px;" width="12" height="12" viewBox="0 0 12 12"><path d="M6 1L11 3.5V8.5L6 11L1 8.5V3.5ZM1 3.5L6 6L11 3.5M6 6V11" fill="none" stroke="#b0b0b0" stroke-width="1.1"/></svg>
<div style="left:401px;top:1030px;width:1px;height:10px;background:#111;"></div>
<div class="t" style="left:407px;top:1030.54px;font-size:10px;line-height:10px;color:#9a9a9a;font-weight:normal;letter-spacing:-0.503px;">Parent &amp; Link</div>
<div style="left:518px;top:1030px;width:1px;height:10px;background:#111;"></div>
<div style="left:534px;top:1045px;width:1px;height:376px;background:#0a0a0a;"></div>
<div style="left:534px;top:1005px;width:1px;height:40px;background:#1c1c1c;"></div>
<div style="left:535px;top:1041px;width:7px;height:380px;background:#2a2a2a;"></div>
<div style="left:535px;top:995px;width:2005px;height:1px;background:#151515;"></div>
<div style="left:535px;top:996px;width:2005px;height:8px;background:#6d6d6d;"></div>
<div style="left:535px;top:1004px;width:2005px;height:1px;background:#151515;"></div>
<div style="left:535px;top:1005px;width:2005px;height:19px;background:#232323;"></div>
<div style="left:535px;top:1024px;width:2005px;height:1px;background:#0d0d0d;"></div>
<div style="left:535px;top:1025px;width:2005px;height:15px;background:#656565;"></div>
<div style="left:535px;top:1040px;width:2005px;height:1px;background:#0d0d0d;"></div>
<div style="left:535px;top:1041px;width:2005px;height:4px;background:#2b2b2b;"></div>
<div style="left:542px;top:1019px;width:1px;height:5px;background:#9a9a9a;"></div>
<div style="left:535px;top:1005px;width:40px;height:19px;overflow:hidden;"><div class="t" style="left:-4px;top:1.69px;font-size:11px;line-height:11px;color:#a8a8a8;">0:00f</div></div>
<div style="left:619px;top:1019px;width:1px;height:5px;background:#9a9a9a;"></div>
<div class="t" style="left:577.7px;width:80px;text-align:center;top:1006.69px;font-size:11px;line-height:11px;color:#a8a8a8;">01f</div>
<div style="left:696px;top:1019px;width:1px;height:5px;background:#9a9a9a;"></div>
<div class="t" style="left:654.3px;width:80px;text-align:center;top:1006.69px;font-size:11px;line-height:11px;color:#a8a8a8;">02f</div>
<div style="left:772px;top:1019px;width:1px;height:5px;background:#9a9a9a;"></div>
<div class="t" style="left:730.9px;width:80px;text-align:center;top:1006.69px;font-size:11px;line-height:11px;color:#a8a8a8;">03f</div>
<div style="left:849px;top:1019px;width:1px;height:5px;background:#9a9a9a;"></div>
<div class="t" style="left:807.5px;width:80px;text-align:center;top:1006.69px;font-size:11px;line-height:11px;color:#a8a8a8;">04f</div>
<div style="left:925px;top:1019px;width:1px;height:5px;background:#9a9a9a;"></div>
<div class="t" style="left:884.1px;width:80px;text-align:center;top:1006.69px;font-size:11px;line-height:11px;color:#a8a8a8;">05f</div>
<div style="left:1002px;top:1019px;width:1px;height:5px;background:#9a9a9a;"></div>
<div class="t" style="left:960.7px;width:80px;text-align:center;top:1006.69px;font-size:11px;line-height:11px;color:#a8a8a8;">06f</div>
<div style="left:1078px;top:1019px;width:1px;height:5px;background:#9a9a9a;"></div>
<div class="t" style="left:1037.3px;width:80px;text-align:center;top:1006.69px;font-size:11px;line-height:11px;color:#a8a8a8;">07f</div>
<div style="left:1155px;top:1019px;width:1px;height:5px;background:#9a9a9a;"></div>
<div class="t" style="left:1113.9px;width:80px;text-align:center;top:1006.69px;font-size:11px;line-height:11px;color:#a8a8a8;">08f</div>
<div style="left:1232px;top:1019px;width:1px;height:5px;background:#9a9a9a;"></div>
<div class="t" style="left:1190.5px;width:80px;text-align:center;top:1006.69px;font-size:11px;line-height:11px;color:#a8a8a8;">09f</div>
<div style="left:1308px;top:1019px;width:1px;height:5px;background:#9a9a9a;"></div>
<div class="t" style="left:1267.1px;width:80px;text-align:center;top:1006.69px;font-size:11px;line-height:11px;color:#a8a8a8;">10f</div>
<div style="left:1385px;top:1019px;width:1px;height:5px;background:#9a9a9a;"></div>
<div class="t" style="left:1343.7px;width:80px;text-align:center;top:1006.69px;font-size:11px;line-height:11px;color:#a8a8a8;">11f</div>
<div style="left:1462px;top:1019px;width:1px;height:5px;background:#9a9a9a;"></div>
<div class="t" style="left:1420.3px;width:80px;text-align:center;top:1006.69px;font-size:11px;line-height:11px;color:#a8a8a8;">12f</div>
<div style="left:1538px;top:1019px;width:1px;height:5px;background:#9a9a9a;"></div>
<div class="t" style="left:1496.9px;width:80px;text-align:center;top:1006.69px;font-size:11px;line-height:11px;color:#a8a8a8;">13f</div>
<div style="left:1615px;top:1019px;width:1px;height:5px;background:#9a9a9a;"></div>
<div class="t" style="left:1573.5px;width:80px;text-align:center;top:1006.69px;font-size:11px;line-height:11px;color:#a8a8a8;">14f</div>
<div style="left:1691px;top:1019px;width:1px;height:5px;background:#9a9a9a;"></div>
<div class="t" style="left:1650.1px;width:80px;text-align:center;top:1006.69px;font-size:11px;line-height:11px;color:#a8a8a8;">01:00f</div>
<div style="left:1768px;top:1019px;width:1px;height:5px;background:#9a9a9a;"></div>
<div class="t" style="left:1726.7px;width:80px;text-align:center;top:1006.69px;font-size:11px;line-height:11px;color:#a8a8a8;">01f</div>
<div style="left:1844px;top:1019px;width:1px;height:5px;background:#9a9a9a;"></div>
<div class="t" style="left:1803.3px;width:80px;text-align:center;top:1006.69px;font-size:11px;line-height:11px;color:#a8a8a8;">02f</div>
<div style="left:1921px;top:1019px;width:1px;height:5px;background:#9a9a9a;"></div>
<div class="t" style="left:1879.9px;width:80px;text-align:center;top:1006.69px;font-size:11px;line-height:11px;color:#a8a8a8;">03f</div>
<div style="left:1998px;top:1019px;width:1px;height:5px;background:#9a9a9a;"></div>
<div class="t" style="left:1956.5px;width:80px;text-align:center;top:1006.69px;font-size:11px;line-height:11px;color:#a8a8a8;">04f</div>
<div style="left:2074px;top:1019px;width:1px;height:5px;background:#9a9a9a;"></div>
<div class="t" style="left:2033.1px;width:80px;text-align:center;top:1006.69px;font-size:11px;line-height:11px;color:#a8a8a8;">05f</div>
<div style="left:2151px;top:1019px;width:1px;height:5px;background:#9a9a9a;"></div>
<div class="t" style="left:2109.7px;width:80px;text-align:center;top:1006.69px;font-size:11px;line-height:11px;color:#a8a8a8;">06f</div>
<div style="left:2228px;top:1019px;width:1px;height:5px;background:#9a9a9a;"></div>
<div class="t" style="left:2186.3px;width:80px;text-align:center;top:1006.69px;font-size:11px;line-height:11px;color:#a8a8a8;">07f</div>
<div style="left:2304px;top:1019px;width:1px;height:5px;background:#9a9a9a;"></div>
<div class="t" style="left:2262.9px;width:80px;text-align:center;top:1006.69px;font-size:11px;line-height:11px;color:#a8a8a8;">08f</div>
<div style="left:2381px;top:1019px;width:1px;height:5px;background:#9a9a9a;"></div>
<div class="t" style="left:2339.5px;width:80px;text-align:center;top:1006.69px;font-size:11px;line-height:11px;color:#a8a8a8;">09f</div>
<div style="left:2457px;top:1019px;width:1px;height:5px;background:#9a9a9a;"></div>
<div class="t" style="left:2416.1px;width:80px;text-align:center;top:1006.69px;font-size:11px;line-height:11px;color:#a8a8a8;">10f</div>
<div style="left:2534px;top:1019px;width:1px;height:5px;background:#9a9a9a;"></div>
<div class="t" style="left:2521px;top:1006.69px;font-size:11px;line-height:11px;color:#a8a8a8;font-weight:normal;">11f</div>
<svg style="position:absolute;left:535px;top:995px;" width="7" height="10" viewBox="0 0 7 10"><path d="M7 0V10H3A3 3 0 0 1 0 7V3A3 3 0 0 1 3 0Z" fill="#3fb0f2"/></svg>
<svg style="position:absolute;left:2533px;top:995px;" width="7" height="10" viewBox="0 0 7 10"><path d="M0 0V10H4A3 3 0 0 0 7 7V3A3 3 0 0 0 4 0Z" fill="#3fb0f2"/></svg>
<svg style="position:absolute;left:535px;top:1025px;" width="7" height="14" viewBox="0 0 7 14"><path d="M7 0V14H0V4A4 4 0 0 1 4 0Z" fill="#3fb0f2"/></svg>
<svg style="position:absolute;left:2533px;top:1025px;" width="7" height="14" viewBox="0 0 7 14"><path d="M0 0V14H7V4A4 4 0 0 0 3 0Z" fill="#3fb0f2"/></svg>
<svg style="position:absolute;left:537px;top:1032px;" width="11" height="8" viewBox="0 0 11 8"><path d="M0 8V4L5 0L10 4V8Z" fill="#cfcfcf"/></svg>
<svg style="position:absolute;left:2530px;top:1032px;" width="11" height="8" viewBox="0 0 11 8"><path d="M0 8V4L5 0L10 4V8Z" fill="#cfcfcf"/></svg>
<div style="left:2540px;top:1005px;width:17px;height:416px;background:#232323;"></div>
<svg style="position:absolute;left:2544px;top:1027px;" width="13" height="15" viewBox="0 0 13 15"><path d="M0 0H13V10L6.5 15L0 10Z" fill="#bdbdbd"/></svg>
<svg style="position:absolute;left:2541px;top:1047px;" width="16" height="14" viewBox="0 0 16 14"><path d="M8 1L1 8L4 8" fill="none" stroke="#bdbdbd" stroke-width="1.2"/><rect x="8" y="3" width="8" height="6" fill="#bdbdbd"/><circle cx="6" cy="9" r="3" fill="none" stroke="#bdbdbd" stroke-width="1.4"/></svg>
<div style="left:2px;top:1045px;width:532px;height:16px;background:#2f2f2f;"></div>
<div style="left:2px;top:1061px;width:532px;height:1px;background:#262626;"></div>
<div style="left:6px;top:1046px;width:13px;height:14px;background:#272727;"></div>
<svg style="position:absolute;left:7px;top:1049px;" width="13" height="9" viewBox="0 0 13 9"><path d="M0.5 4.5C3 0 10 0 12.5 4.5C10 9 3 9 0.5 4.5Z" fill="#c4c4c4"/><circle cx="6.5" cy="4.5" r="2.2" fill="#232323"/><circle cx="6.5" cy="4.5" r="1" fill="#555"/></svg>
<div style="left:36px;top:1046px;width:13px;height:14px;background:#222222;"></div>
<div style="left:51px;top:1046px;width:13px;height:14px;background:#222222;"></div>
<svg style="position:absolute;left:75px;top:1049px;" width="6" height="9" viewBox="0 0 6 9"><path d="M1 1L5 4.5L1 8" fill="none" stroke="#a8a8a8" stroke-width="1.1"/></svg>
<div style="left:87px;top:1047px;width:12px;height:12px;background:#aaa6cc;"></div>
<div class="t" style="left:108.5px;top:1047.69px;font-size:11px;line-height:11px;color:#c0c0c0;font-weight:normal;">1</div>
<div style="left:137px;top:1047px;width:14px;height:13px;background:#ffffff;border:1px solid #000;"></div>
<div class="t" style="left:157px;top:1047.69px;font-size:11px;line-height:11px;color:#c4c4c4;font-weight:normal;letter-spacing:0.307px;">Adjustment Layer 3</div>
<div style="left:269px;top:1046px;width:13px;height:14px;background:#272727;"></div>
<svg style="position:absolute;left:269px;top:1047px;" width="13" height="12" viewBox="0 0 13 12"><path d="M2 6A4.5 4.5 0 0 1 11 6Z" fill="#c0c0c0"/><circle cx="4.7" cy="4.3" r="0.9" fill="#232323"/><circle cx="8.3" cy="4.3" r="0.9" fill="#232323"/><rect x="5.8" y="5.5" width="1.4" height="6" fill="#c0c0c0"/><rect x="0" y="7.5" width="13" height="1" fill="#c0c0c0"/></svg>
<div style="left:284px;top:1046px;width:13px;height:14px;background:#222222;"></div>
<div style="left:300px;top:1046px;width:12px;height:14px;background:#222222;"></div>
<svg style="position:absolute;left:300px;top:1047px;" width="12" height="12" viewBox="0 0 12 12"><path d="M1.5 11L10.5 1" stroke="#b8b8b8" stroke-width="1.3"/></svg>
<div style="left:314px;top:1046px;width:13px;height:14px;background:#222222;"></div>
<div class="t" style="left:315px;top:1046.42px;font-size:12.5px;line-height:12.5px;color:#b8b8b8;font-weight:normal;font-family:'Liberation Serif',serif;font-style:italic;">fx</div>
<div style="left:344px;top:1046px;width:13px;height:14px;background:#222222;"></div>
<div style="left:359px;top:1046px;width:13px;height:14px;background:#222222;"></div>
<svg style="position:absolute;left:359px;top:1047px;" width="13" height="13" viewBox="0 0 13 13"><circle cx="6.5" cy="6.5" r="5.6" fill="#c4c4c4"/><path d="M9.6 3.4L3.4 9.6A4.4 4.4 0 0 1 9.6 3.4Z" fill="#262626"/></svg>
<div style="left:374px;top:1046px;width:13px;height:14px;background:#222222;"></div>
<svg style="position:absolute;left:406px;top:1045px;" width="14" height="15" viewBox="0 0 14 15"><path d="M12 2.6V7.5A5 5 0 0 1 2 7.5A3.5 3.5 0 0 1 9 7.5A2.5 2.5 0 0 1 4 7.5A1.25 1.25 0 0 1 6.5 7.5" fill="none" stroke="#b4b4b4" stroke-width="1.15"/></svg>
<div style="left:425px;top:1046px;width:89px;height:14px;background:#1c1c1c;"></div>
<div class="t" style="left:433px;top:1047.69px;font-size:11px;line-height:11px;color:#c4c4c4;font-weight:normal;">None</div>
<svg style="position:absolute;left:501px;top:1050px;" width="10" height="6" viewBox="0 0 10 6"><path d="M1 1L5.0 5L9 1" fill="none" stroke="#b8b8b8" stroke-width="1.1"/></svg>
<div style="left:542px;top:1045px;width:1992px;height:16px;background:#3c3c3c;"></div>
<div style="left:542px;top:1061px;width:1992px;height:1px;background:#242326;"></div>
<div style="left:2534px;top:1045px;width:6px;height:17px;background:#333333;"></div>
<div style="left:1538px;top:1045px;width:766px;height:16px;background:#767385;border-top:1px solid #84818f;"></div>
<div style="left:2px;top:1062px;width:532px;height:16px;background:#2f2f2f;"></div>
<div style="left:2px;top:1078px;width:532px;height:1px;background:#262626;"></div>
<div style="left:6px;top:1063px;width:13px;height:14px;background:#272727;"></div>
<svg style="position:absolute;left:7px;top:1066px;" width="13" height="9" viewBox="0 0 13 9"><path d="M0.5 4.5C3 0 10 0 12.5 4.5C10 9 3 9 0.5 4.5Z" fill="#c4c4c4"/><circle cx="6.5" cy="4.5" r="2.2" fill="#232323"/><circle cx="6.5" cy="4.5" r="1" fill="#555"/></svg>
<div style="left:36px;top:1063px;width:13px;height:14px;background:#222222;"></div>
<div style="left:51px;top:1063px;width:13px;height:14px;background:#222222;"></div>
<svg style="position:absolute;left:75px;top:1066px;" width="6" height="9" viewBox="0 0 6 9"><path d="M1 1L5 4.5L1 8" fill="none" stroke="#a8a8a8" stroke-width="1.1"/></svg>
<div style="left:87px;top:1064px;width:12px;height:12px;background:#aaa6cc;"></div>
<div class="t" style="left:108.5px;top:1064.69px;font-size:11px;line-height:11px;color:#c0c0c0;font-weight:normal;">2</div>
<div style="left:137px;top:1064px;width:14px;height:13px;background:#ffffff;border:1px solid #000;"></div>
<div class="t" style="left:157px;top:1064.69px;font-size:11px;line-height:11px;color:#c4c4c4;font-weight:normal;letter-spacing:0.079px;">One Framer</div>
<div style="left:269px;top:1063px;width:13px;height:14px;background:#272727;"></div>
<svg style="position:absolute;left:269px;top:1064px;" width="13" height="12" viewBox="0 0 13 12"><path d="M2 6A4.5 4.5 0 0 1 11 6Z" fill="#c0c0c0"/><circle cx="4.7" cy="4.3" r="0.9" fill="#232323"/><circle cx="8.3" cy="4.3" r="0.9" fill="#232323"/><rect x="5.8" y="5.5" width="1.4" height="6" fill="#c0c0c0"/><rect x="0" y="7.5" width="13" height="1" fill="#c0c0c0"/></svg>
<div style="left:284px;top:1063px;width:13px;height:14px;background:#222222;"></div>
<div style="left:300px;top:1063px;width:12px;height:14px;background:#222222;"></div>
<svg style="position:absolute;left:300px;top:1064px;" width="12" height="12" viewBox="0 0 12 12"><path d="M1.5 11L10.5 1" stroke="#b8b8b8" stroke-width="1.3"/></svg>
<div style="left:314px;top:1063px;width:13px;height:14px;background:#222222;"></div>
<div class="t" style="left:315px;top:1063.42px;font-size:12.5px;line-height:12.5px;color:#b8b8b8;font-weight:normal;font-family:'Liberation Serif',serif;font-style:italic;">fx</div>
<div style="left:344px;top:1063px;width:13px;height:14px;background:#222222;"></div>
<div style="left:359px;top:1063px;width:13px;height:14px;background:#222222;"></div>
<svg style="position:absolute;left:359px;top:1064px;" width="13" height="13" viewBox="0 0 13 13"><circle cx="6.5" cy="6.5" r="5.6" fill="#c4c4c4"/><path d="M9.6 3.4L3.4 9.6A4.4 4.4 0 0 1 9.6 3.4Z" fill="#262626"/></svg>
<div style="left:374px;top:1063px;width:13px;height:14px;background:#222222;"></div>
<svg style="position:absolute;left:406px;top:1062px;" width="14" height="15" viewBox="0 0 14 15"><path d="M12 2.6V7.5A5 5 0 0 1 2 7.5A3.5 3.5 0 0 1 9 7.5A2.5 2.5 0 0 1 4 7.5A1.25 1.25 0 0 1 6.5 7.5" fill="none" stroke="#b4b4b4" stroke-width="1.15"/></svg>
<div style="left:425px;top:1063px;width:89px;height:14px;background:#1c1c1c;"></div>
<div class="t" style="left:433px;top:1064.69px;font-size:11px;line-height:11px;color:#c4c4c4;font-weight:normal;">None</div>
<svg style="position:absolute;left:501px;top:1067px;" width="10" height="6" viewBox="0 0 10 6"><path d="M1 1L5.0 5L9 1" fill="none" stroke="#b8b8b8" stroke-width="1.1"/></svg>
<div style="left:542px;top:1062px;width:1992px;height:16px;background:#3c3c3c;"></div>
<div style="left:542px;top:1078px;width:1992px;height:1px;background:#242326;"></div>
<div style="left:2534px;top:1062px;width:6px;height:17px;background:#333333;"></div>
<div style="left:1155px;top:1062px;width:1149px;height:16px;background:#767385;border-top:1px solid #84818f;"></div>
<div style="left:2px;top:1079px;width:532px;height:16px;background:#4a4a4a;"></div>
<div style="left:2px;top:1095px;width:532px;height:1px;background:#262626;"></div>
<div style="left:6px;top:1080px;width:13px;height:14px;background:#3a3a3a;"></div>
<svg style="position:absolute;left:7px;top:1083px;" width="13" height="9" viewBox="0 0 13 9"><path d="M0.5 4.5C3 0 10 0 12.5 4.5C10 9 3 9 0.5 4.5Z" fill="#c4c4c4"/><circle cx="6.5" cy="4.5" r="2.2" fill="#232323"/><circle cx="6.5" cy="4.5" r="1" fill="#555"/></svg>
<div style="left:36px;top:1080px;width:13px;height:14px;background:#353535;"></div>
<div style="left:51px;top:1080px;width:13px;height:14px;background:#353535;"></div>
<svg style="position:absolute;left:75px;top:1083px;" width="6" height="9" viewBox="0 0 6 9"><path d="M1 1L5 4.5L1 8" fill="none" stroke="#a8a8a8" stroke-width="1.1"/></svg>
<div style="left:87px;top:1081px;width:12px;height:12px;background:#aaa6cc;"></div>
<div class="t" style="left:108.5px;top:1081.69px;font-size:11px;line-height:11px;color:#c0c0c0;font-weight:normal;">3</div>
<div style="left:137px;top:1081px;width:14px;height:13px;background:#ffffff;border:1px solid #000;"></div>
<div style="left:153px;top:1079px;width:111px;height:16px;background:#ababab;"></div>
<div class="t" style="left:157px;top:1081.69px;font-size:11px;line-height:11px;color:#1a1a1a;font-weight:normal;letter-spacing:0.307px;">Adjustment Layer 2</div>
<div style="left:269px;top:1080px;width:13px;height:14px;background:#3d3d3d;"></div>
<svg style="position:absolute;left:269px;top:1081px;" width="13" height="12" viewBox="0 0 13 12"><path d="M2 6A4.5 4.5 0 0 1 11 6Z" fill="#c0c0c0"/><circle cx="4.7" cy="4.3" r="0.9" fill="#232323"/><circle cx="8.3" cy="4.3" r="0.9" fill="#232323"/><rect x="5.8" y="5.5" width="1.4" height="6" fill="#c0c0c0"/><rect x="0" y="7.5" width="13" height="1" fill="#c0c0c0"/></svg>
<div style="left:284px;top:1080px;width:13px;height:14px;background:#353535;"></div>
<div style="left:300px;top:1080px;width:12px;height:14px;background:#353535;"></div>
<svg style="position:absolute;left:300px;top:1081px;" width="12" height="12" viewBox="0 0 12 12"><path d="M1.5 11L10.5 1" stroke="#b8b8b8" stroke-width="1.3"/></svg>
<div style="left:314px;top:1080px;width:13px;height:14px;background:#353535;"></div>
<div class="t" style="left:315px;top:1080.42px;font-size:12.5px;line-height:12.5px;color:#b8b8b8;font-weight:normal;font-family:'Liberation Serif',serif;font-style:italic;">fx</div>
<div style="left:344px;top:1080px;width:13px;height:14px;background:#353535;"></div>
<div style="left:359px;top:1080px;width:13px;height:14px;background:#353535;"></div>
<svg style="position:absolute;left:359px;top:1081px;" width="13" height="13" viewBox="0 0 13 13"><circle cx="6.5" cy="6.5" r="5.6" fill="#c4c4c4"/><path d="M9.6 3.4L3.4 9.6A4.4 4.4 0 0 1 9.6 3.4Z" fill="#262626"/></svg>
<div style="left:374px;top:1080px;width:13px;height:14px;background:#353535;"></div>
<svg style="position:absolute;left:406px;top:1079px;" width="14" height="15" viewBox="0 0 14 15"><path d="M12 2.6V7.5A5 5 0 0 1 2 7.5A3.5 3.5 0 0 1 9 7.5A2.5 2.5 0 0 1 4 7.5A1.25 1.25 0 0 1 6.5 7.5" fill="none" stroke="#b4b4b4" stroke-width="1.15"/></svg>
<div style="left:425px;top:1080px;width:89px;height:14px;background:#1c1c1c;"></div>
<div class="t" style="left:433px;top:1081.69px;font-size:11px;line-height:11px;color:#c4c4c4;font-weight:normal;">None</div>
<svg style="position:absolute;left:501px;top:1084px;" width="10" height="6" viewBox="0 0 10 6"><path d="M1 1L5.0 5L9 1" fill="none" stroke="#b8b8b8" stroke-width="1.1"/></svg>
<div style="left:542px;top:1079px;width:1992px;height:16px;background:#4f4f4f;"></div>
<div style="left:542px;top:1095px;width:1992px;height:1px;background:#242326;"></div>
<div style="left:2534px;top:1079px;width:6px;height:17px;background:#333333;"></div>
<div style="left:1691px;top:1079px;width:613px;height:16px;background:linear-gradient(#a9a9c9,#8f91bb);border-top:1px solid #d4d4e2;border-left:1px solid #e2e2ea;"></div>
<svg style="position:absolute;left:1692px;top:1080px;" width="612" height="15" viewBox="0 0 612 15"><filter id="nz"><feTurbulence type="fractalNoise" baseFrequency="0.9" numOctaves="2" seed="3"/><feColorMatrix values="0 0 0 0 0.5  0 0 0 0 0.5  0 0 0 0 0.6  0 0 0 1.4 -0.55"/></filter><rect width="613" height="15" filter="url(#nz)" opacity="0.9"/></svg>
<div style="left:2px;top:1096px;width:532px;height:16px;background:#2f2f2f;"></div>
<div style="left:2px;top:1112px;width:532px;height:1px;background:#262626;"></div>
<div style="left:6px;top:1097px;width:13px;height:14px;background:#272727;"></div>
<svg style="position:absolute;left:7px;top:1100px;" width="13" height="9" viewBox="0 0 13 9"><path d="M0.5 4.5C3 0 10 0 12.5 4.5C10 9 3 9 0.5 4.5Z" fill="#c4c4c4"/><circle cx="6.5" cy="4.5" r="2.2" fill="#232323"/><circle cx="6.5" cy="4.5" r="1" fill="#555"/></svg>
<div style="left:36px;top:1097px;width:13px;height:14px;background:#222222;"></div>
<div style="left:51px;top:1097px;width:13px;height:14px;background:#222222;"></div>
<svg style="position:absolute;left:75px;top:1100px;" width="6" height="9" viewBox="0 0 6 9"><path d="M1 1L5 4.5L1 8" fill="none" stroke="#a8a8a8" stroke-width="1.1"/></svg>
<div style="left:87px;top:1098px;width:12px;height:12px;background:#aaa6cc;"></div>
<div class="t" style="left:108.5px;top:1098.69px;font-size:11px;line-height:11px;color:#c0c0c0;font-weight:normal;">4</div>
<div style="left:137px;top:1098px;width:14px;height:13px;background:#ffffff;border:1px solid #000;"></div>
<div class="t" style="left:157px;top:1098.69px;font-size:11px;line-height:11px;color:#c4c4c4;font-weight:normal;letter-spacing:0.079px;">One Framer</div>
<div style="left:269px;top:1097px;width:13px;height:14px;background:#272727;"></div>
<svg style="position:absolute;left:269px;top:1098px;" width="13" height="12" viewBox="0 0 13 12"><path d="M2 6A4.5 4.5 0 0 1 11 6Z" fill="#c0c0c0"/><circle cx="4.7" cy="4.3" r="0.9" fill="#232323"/><circle cx="8.3" cy="4.3" r="0.9" fill="#232323"/><rect x="5.8" y="5.5" width="1.4" height="6" fill="#c0c0c0"/><rect x="0" y="7.5" width="13" height="1" fill="#c0c0c0"/></svg>
<div style="left:284px;top:1097px;width:13px;height:14px;background:#222222;"></div>
<div style="left:300px;top:1097px;width:12px;height:14px;background:#222222;"></div>
<svg style="position:absolute;left:300px;top:1098px;" width="12" height="12" viewBox="0 0 12 12"><path d="M1.5 11L10.5 1" stroke="#b8b8b8" stroke-width="1.3"/></svg>
<div style="left:314px;top:1097px;width:13px;height:14px;background:#222222;"></div>
<div class="t" style="left:315px;top:1097.42px;font-size:12.5px;line-height:12.5px;color:#b8b8b8;font-weight:normal;font-family:'Liberation Serif',serif;font-style:italic;">fx</div>
<div style="left:344px;top:1097px;width:13px;height:14px;background:#222222;"></div>
<div style="left:359px;top:1097px;width:13px;height:14px;background:#222222;"></div>
<svg style="position:absolute;left:359px;top:1098px;" width="13" height="13" viewBox="0 0 13 13"><circle cx="6.5" cy="6.5" r="5.6" fill="#c4c4c4"/><path d="M9.6 3.4L3.4 9.6A4.4 4.4 0 0 1 9.6 3.4Z" fill="#262626"/></svg>
<div style="left:374px;top:1097px;width:13px;height:14px;background:#222222;"></div>
<svg style="position:absolute;left:406px;top:1096px;" width="14" height="15" viewBox="0 0 14 15"><path d="M12 2.6V7.5A5 5 0 0 1 2 7.5A3.5 3.5 0 0 1 9 7.5A2.5 2.5 0 0 1 4 7.5A1.25 1.25 0 0 1 6.5 7.5" fill="none" stroke="#b4b4b4" stroke-width="1.15"/></svg>
<div style="left:425px;top:1097px;width:89px;height:14px;background:#1c1c1c;"></div>
<div class="t" style="left:433px;top:1098.69px;font-size:11px;line-height:11px;color:#c4c4c4;font-weight:normal;">None</div>
<svg style="position:absolute;left:501px;top:1101px;" width="10" height="6" viewBox="0 0 10 6"><path d="M1 1L5.0 5L9 1" fill="none" stroke="#b8b8b8" stroke-width="1.1"/></svg>
<div style="left:542px;top:1096px;width:1992px;height:16px;background:#3c3c3c;"></div>
<div style="left:542px;top:1112px;width:1992px;height:1px;background:#242326;"></div>
<div style="left:2534px;top:1096px;width:6px;height:17px;background:#333333;"></div>
<div style="left:1155px;top:1096px;width:1149px;height:16px;background:#767385;border-top:1px solid #84818f;"></div>
<div style="left:2px;top:1113px;width:532px;height:16px;background:#2f2f2f;"></div>
<div style="left:2px;top:1129px;width:532px;height:1px;background:#262626;"></div>
<div style="left:6px;top:1114px;width:13px;height:14px;background:#272727;"></div>
<svg style="position:absolute;left:7px;top:1117px;" width="13" height="9" viewBox="0 0 13 9"><path d="M0.5 4.5C3 0 10 0 12.5 4.5C10 9 3 9 0.5 4.5Z" fill="#c4c4c4"/><circle cx="6.5" cy="4.5" r="2.2" fill="#232323"/><circle cx="6.5" cy="4.5" r="1" fill="#555"/></svg>
<div style="left:36px;top:1114px;width:13px;height:14px;background:#222222;"></div>
<div style="left:51px;top:1114px;width:13px;height:14px;background:#222222;"></div>
<svg style="position:absolute;left:75px;top:1117px;" width="6" height="9" viewBox="0 0 6 9"><path d="M1 1L5 4.5L1 8" fill="none" stroke="#a8a8a8" stroke-width="1.1"/></svg>
<div style="left:87px;top:1115px;width:12px;height:12px;background:#aaa6cc;"></div>
<div class="t" style="left:108.5px;top:1115.69px;font-size:11px;line-height:11px;color:#c0c0c0;font-weight:normal;">5</div>
<div style="left:137px;top:1115px;width:14px;height:13px;background:#ffffff;border:1px solid #000;"></div>
<div class="t" style="left:157px;top:1115.69px;font-size:11px;line-height:11px;color:#c4c4c4;font-weight:normal;letter-spacing:0.079px;">One Framer</div>
<div style="left:269px;top:1114px;width:13px;height:14px;background:#272727;"></div>
<svg style="position:absolute;left:269px;top:1115px;" width="13" height="12" viewBox="0 0 13 12"><path d="M2 6A4.5 4.5 0 0 1 11 6Z" fill="#c0c0c0"/><circle cx="4.7" cy="4.3" r="0.9" fill="#232323"/><circle cx="8.3" cy="4.3" r="0.9" fill="#232323"/><rect x="5.8" y="5.5" width="1.4" height="6" fill="#c0c0c0"/><rect x="0" y="7.5" width="13" height="1" fill="#c0c0c0"/></svg>
<div style="left:284px;top:1114px;width:13px;height:14px;background:#222222;"></div>
<div style="left:300px;top:1114px;width:12px;height:14px;background:#222222;"></div>
<svg style="position:absolute;left:300px;top:1115px;" width="12" height="12" viewBox="0 0 12 12"><path d="M1.5 11L10.5 1" stroke="#b8b8b8" stroke-width="1.3"/></svg>
<div style="left:314px;top:1114px;width:13px;height:14px;background:#222222;"></div>
<div class="t" style="left:315px;top:1114.42px;font-size:12.5px;line-height:12.5px;color:#b8b8b8;font-weight:normal;font-family:'Liberation Serif',serif;font-style:italic;">fx</div>
<div style="left:344px;top:1114px;width:13px;height:14px;background:#222222;"></div>
<div style="left:359px;top:1114px;width:13px;height:14px;background:#222222;"></div>
<svg style="position:absolute;left:359px;top:1115px;" width="13" height="13" viewBox="0 0 13 13"><circle cx="6.5" cy="6.5" r="5.6" fill="#c4c4c4"/><path d="M9.6 3.4L3.4 9.6A4.4 4.4 0 0 1 9.6 3.4Z" fill="#262626"/></svg>
<div style="left:374px;top:1114px;width:13px;height:14px;background:#222222;"></div>
<svg style="position:absolute;left:406px;top:1113px;" width="14" height="15" viewBox="0 0 14 15"><path d="M12 2.6V7.5A5 5 0 0 1 2 7.5A3.5 3.5 0 0 1 9 7.5A2.5 2.5 0 0 1 4 7.5A1.25 1.25 0 0 1 6.5 7.5" fill="none" stroke="#b4b4b4" stroke-width="1.15"/></svg>
<div style="left:425px;top:1114px;width:89px;height:14px;background:#1c1c1c;"></div>
<div class="t" style="left:433px;top:1115.69px;font-size:11px;line-height:11px;color:#c4c4c4;font-weight:normal;">None</div>
<svg style="position:absolute;left:501px;top:1118px;" width="10" height="6" viewBox="0 0 10 6"><path d="M1 1L5.0 5L9 1" fill="none" stroke="#b8b8b8" stroke-width="1.1"/></svg>
<div style="left:542px;top:1113px;width:1992px;height:16px;background:#3c3c3c;"></div>
<div style="left:542px;top:1129px;width:1992px;height:1px;background:#242326;"></div>
<div style="left:2534px;top:1113px;width:6px;height:17px;background:#333333;"></div>
<div style="left:1155px;top:1113px;width:1149px;height:16px;background:#767385;border-top:1px solid #84818f;"></div>
<div style="left:2px;top:1130px;width:532px;height:16px;background:#2f2f2f;"></div>
<div style="left:2px;top:1146px;width:532px;height:1px;background:#262626;"></div>
<div style="left:6px;top:1131px;width:13px;height:14px;background:#272727;"></div>
<svg style="position:absolute;left:7px;top:1134px;" width="13" height="9" viewBox="0 0 13 9"><path d="M0.5 4.5C3 0 10 0 12.5 4.5C10 9 3 9 0.5 4.5Z" fill="#c4c4c4"/><circle cx="6.5" cy="4.5" r="2.2" fill="#232323"/><circle cx="6.5" cy="4.5" r="1" fill="#555"/></svg>
<div style="left:21px;top:1131px;width:13px;height:14px;background:#222222;"></div>
<div style="left:36px;top:1131px;width:13px;height:14px;background:#222222;"></div>
<div style="left:51px;top:1131px;width:13px;height:14px;background:#222222;"></div>
<svg style="position:absolute;left:75px;top:1134px;" width="6" height="9" viewBox="0 0 6 9"><path d="M1 1L5 4.5L1 8" fill="none" stroke="#a8a8a8" stroke-width="1.1"/></svg>
<div style="left:87px;top:1132px;width:12px;height:12px;background:#a89a7c;"></div>
<div class="t" style="left:108.5px;top:1132.69px;font-size:11px;line-height:11px;color:#c0c0c0;font-weight:normal;">6</div>
<svg style="position:absolute;left:136px;top:1132px;" width="16" height="13" viewBox="0 0 16 13"><rect x="0" y="0" width="16" height="13" fill="#c8c8c8"/><path d="M1.5 1.5V11.5M14.5 1.5V11.5" stroke="#333" stroke-width="1" stroke-dasharray="1 1.3"/><rect x="3" y="1" width="10" height="9.5" fill="#d8d8d8"/><rect x="3" y="11.2" width="10" height="0.8" fill="#444"/><rect x="8" y="3" width="4" height="4" fill="#d04a3a"/><circle cx="6" cy="4" r="2" fill="#3a80d0"/><path d="M4 10L7 5.5L10 10Z" fill="#2aa040"/></svg>
<div class="t" style="left:157px;top:1132.69px;font-size:11px;line-height:11px;color:#c4c4c4;font-weight:normal;letter-spacing:0.21px;">My Hero...4 Comp 1</div>
<div style="left:269px;top:1131px;width:13px;height:14px;background:#272727;"></div>
<svg style="position:absolute;left:269px;top:1132px;" width="13" height="12" viewBox="0 0 13 12"><path d="M2 6A4.5 4.5 0 0 1 11 6Z" fill="#c0c0c0"/><circle cx="4.7" cy="4.3" r="0.9" fill="#232323"/><circle cx="8.3" cy="4.3" r="0.9" fill="#232323"/><rect x="5.8" y="5.5" width="1.4" height="6" fill="#c0c0c0"/><rect x="0" y="7.5" width="13" height="1" fill="#c0c0c0"/></svg>
<div style="left:284px;top:1131px;width:13px;height:14px;background:#222222;"></div>
<div style="left:300px;top:1131px;width:12px;height:14px;background:#222222;"></div>
<svg style="position:absolute;left:300px;top:1132px;" width="12" height="12" viewBox="0 0 12 12"><path d="M1.5 11L10.5 1" stroke="#b8b8b8" stroke-width="1.3"/></svg>
<div style="left:314px;top:1131px;width:13px;height:14px;background:#222222;"></div>
<div class="t" style="left:315px;top:1131.42px;font-size:12.5px;line-height:12.5px;color:#b8b8b8;font-weight:normal;font-family:'Liberation Serif',serif;font-style:italic;">fx</div>
<div style="left:344px;top:1131px;width:13px;height:14px;background:#222222;"></div>
<svg style="position:absolute;left:343px;top:1131px;" width="15" height="14" viewBox="0 0 15 14"><circle cx="9" cy="5.5" r="4.5" fill="#b8b8b8"/><circle cx="6" cy="9" r="4" fill="none" stroke="#b8b8b8" stroke-width="1"/><circle cx="5" cy="10" r="3" fill="none" stroke="#b8b8b8" stroke-width="0.8"/></svg>
<div style="left:359px;top:1131px;width:13px;height:14px;background:#222222;"></div>
<div style="left:374px;top:1131px;width:13px;height:14px;background:#222222;"></div>
<svg style="position:absolute;left:406px;top:1130px;" width="14" height="15" viewBox="0 0 14 15"><path d="M12 2.6V7.5A5 5 0 0 1 2 7.5A3.5 3.5 0 0 1 9 7.5A2.5 2.5 0 0 1 4 7.5A1.25 1.25 0 0 1 6.5 7.5" fill="none" stroke="#b4b4b4" stroke-width="1.15"/></svg>
<div style="left:425px;top:1131px;width:89px;height:14px;background:#1c1c1c;"></div>
<div class="t" style="left:433px;top:1132.69px;font-size:11px;line-height:11px;color:#c4c4c4;font-weight:normal;">None</div>
<svg style="position:absolute;left:501px;top:1135px;" width="10" height="6" viewBox="0 0 10 6"><path d="M1 1L5.0 5L9 1" fill="none" stroke="#b8b8b8" stroke-width="1.1"/></svg>
<div style="left:542px;top:1130px;width:1992px;height:16px;background:#3c3c3c;"></div>
<div style="left:542px;top:1146px;width:1992px;height:1px;background:#242326;"></div>
<div style="left:2534px;top:1130px;width:6px;height:17px;background:#333333;"></div>
<div style="left:2074px;top:1130px;width:466px;height:16px;background:#726a59;border-top:1px solid #80786a;"></div>
<div style="left:2px;top:1147px;width:532px;height:16px;background:#2f2f2f;"></div>
<div style="left:2px;top:1163px;width:532px;height:1px;background:#262626;"></div>
<div style="left:6px;top:1148px;width:13px;height:14px;background:#272727;"></div>
<svg style="position:absolute;left:7px;top:1151px;" width="13" height="9" viewBox="0 0 13 9"><path d="M0.5 4.5C3 0 10 0 12.5 4.5C10 9 3 9 0.5 4.5Z" fill="#c4c4c4"/><circle cx="6.5" cy="4.5" r="2.2" fill="#232323"/><circle cx="6.5" cy="4.5" r="1" fill="#555"/></svg>
<div style="left:36px;top:1148px;width:13px;height:14px;background:#222222;"></div>
<div style="left:51px;top:1148px;width:13px;height:14px;background:#222222;"></div>
<svg style="position:absolute;left:75px;top:1151px;" width="6" height="9" viewBox="0 0 6 9"><path d="M1 1L5 4.5L1 8" fill="none" stroke="#a8a8a8" stroke-width="1.1"/></svg>
<div style="left:87px;top:1149px;width:12px;height:12px;background:#aaa6cc;"></div>
<div class="t" style="left:108.5px;top:1149.69px;font-size:11px;line-height:11px;color:#c0c0c0;font-weight:normal;">7</div>
<div style="left:137px;top:1149px;width:14px;height:13px;background:#ffffff;border:1px solid #000;"></div>
<div class="t" style="left:157px;top:1149.69px;font-size:11px;line-height:11px;color:#c4c4c4;font-weight:normal;letter-spacing:0.375px;">adjustment Layer</div>
<div style="left:269px;top:1148px;width:13px;height:14px;background:#272727;"></div>
<svg style="position:absolute;left:269px;top:1149px;" width="13" height="12" viewBox="0 0 13 12"><path d="M2 6A4.5 4.5 0 0 1 11 6Z" fill="#c0c0c0"/><circle cx="4.7" cy="4.3" r="0.9" fill="#232323"/><circle cx="8.3" cy="4.3" r="0.9" fill="#232323"/><rect x="5.8" y="5.5" width="1.4" height="6" fill="#c0c0c0"/><rect x="0" y="7.5" width="13" height="1" fill="#c0c0c0"/></svg>
<div style="left:284px;top:1148px;width:13px;height:14px;background:#222222;"></div>
<div style="left:300px;top:1148px;width:12px;height:14px;background:#222222;"></div>
<svg style="position:absolute;left:300px;top:1149px;" width="12" height="12" viewBox="0 0 12 12"><path d="M1.5 11L10.5 1" stroke="#b8b8b8" stroke-width="1.3"/></svg>
<div style="left:314px;top:1148px;width:13px;height:14px;background:#222222;"></div>
<div class="t" style="left:315px;top:1148.42px;font-size:12.5px;line-height:12.5px;color:#b8b8b8;font-weight:normal;font-family:'Liberation Serif',serif;font-style:italic;">fx</div>
<div style="left:344px;top:1148px;width:13px;height:14px;background:#222222;"></div>
<div style="left:359px;top:1148px;width:13px;height:14px;background:#222222;"></div>
<svg style="position:absolute;left:359px;top:1149px;" width="13" height="13" viewBox="0 0 13 13"><circle cx="6.5" cy="6.5" r="5.6" fill="#c4c4c4"/><path d="M9.6 3.4L3.4 9.6A4.4 4.4 0 0 1 9.6 3.4Z" fill="#262626"/></svg>
<div style="left:374px;top:1148px;width:13px;height:14px;background:#222222;"></div>
<svg style="position:absolute;left:406px;top:1147px;" width="14" height="15" viewBox="0 0 14 15"><path d="M12 2.6V7.5A5 5 0 0 1 2 7.5A3.5 3.5 0 0 1 9 7.5A2.5 2.5 0 0 1 4 7.5A1.25 1.25 0 0 1 6.5 7.5" fill="none" stroke="#b4b4b4" stroke-width="1.15"/></svg>
<div style="left:425px;top:1148px;width:89px;height:14px;background:#1c1c1c;"></div>
<div class="t" style="left:433px;top:1149.69px;font-size:11px;line-height:11px;color:#c4c4c4;font-weight:normal;">None</div>
<svg style="position:absolute;left:501px;top:1152px;" width="10" height="6" viewBox="0 0 10 6"><path d="M1 1L5.0 5L9 1" fill="none" stroke="#b8b8b8" stroke-width="1.1"/></svg>
<div style="left:542px;top:1147px;width:1992px;height:16px;background:#3c3c3c;"></div>
<div style="left:542px;top:1163px;width:1992px;height:1px;background:#242326;"></div>
<div style="left:2534px;top:1147px;width:6px;height:17px;background:#333333;"></div>
<div style="left:542px;top:1147px;width:1532px;height:16px;background:#767385;border-top:1px solid #84818f;"></div>
<div style="left:2px;top:1164px;width:532px;height:16px;background:#2f2f2f;"></div>
<div style="left:2px;top:1180px;width:532px;height:1px;background:#262626;"></div>
<div style="left:6px;top:1165px;width:13px;height:14px;background:#272727;"></div>
<svg style="position:absolute;left:7px;top:1168px;" width="13" height="9" viewBox="0 0 13 9"><path d="M0.5 4.5C3 0 10 0 12.5 4.5C10 9 3 9 0.5 4.5Z" fill="#c4c4c4"/><circle cx="6.5" cy="4.5" r="2.2" fill="#232323"/><circle cx="6.5" cy="4.5" r="1" fill="#555"/></svg>
<div style="left:36px;top:1165px;width:13px;height:14px;background:#222222;"></div>
<div style="left:51px;top:1165px;width:13px;height:14px;background:#222222;"></div>
<svg style="position:absolute;left:75px;top:1168px;" width="6" height="9" viewBox="0 0 6 9"><path d="M1 1L5 4.5L1 8" fill="none" stroke="#a8a8a8" stroke-width="1.1"/></svg>
<div style="left:87px;top:1166px;width:12px;height:12px;background:#aaa6cc;"></div>
<div class="t" style="left:108.5px;top:1166.69px;font-size:11px;line-height:11px;color:#c0c0c0;font-weight:normal;">8</div>
<div style="left:137px;top:1166px;width:14px;height:13px;background:#ffffff;border:1px solid #000;"></div>
<div class="t" style="left:157px;top:1166.69px;font-size:11px;line-height:11px;color:#c4c4c4;font-weight:normal;letter-spacing:0.375px;">adjustment Layer</div>
<div style="left:269px;top:1165px;width:13px;height:14px;background:#272727;"></div>
<svg style="position:absolute;left:269px;top:1166px;" width="13" height="12" viewBox="0 0 13 12"><path d="M2 6A4.5 4.5 0 0 1 11 6Z" fill="#c0c0c0"/><circle cx="4.7" cy="4.3" r="0.9" fill="#232323"/><circle cx="8.3" cy="4.3" r="0.9" fill="#232323"/><rect x="5.8" y="5.5" width="1.4" height="6" fill="#c0c0c0"/><rect x="0" y="7.5" width="13" height="1" fill="#c0c0c0"/></svg>
<div style="left:284px;top:1165px;width:13px;height:14px;background:#222222;"></div>
<div style="left:300px;top:1165px;width:12px;height:14px;background:#222222;"></div>
<svg style="position:absolute;left:300px;top:1166px;" width="12" height="12" viewBox="0 0 12 12"><path d="M1.5 11L10.5 1" stroke="#b8b8b8" stroke-width="1.3"/></svg>
<div style="left:314px;top:1165px;width:13px;height:14px;background:#222222;"></div>
<div class="t" style="left:315px;top:1165.42px;font-size:12.5px;line-height:12.5px;color:#b8b8b8;font-weight:normal;font-family:'Liberation Serif',serif;font-style:italic;">fx</div>
<div style="left:344px;top:1165px;width:13px;height:14px;background:#222222;"></div>
<div style="left:359px;top:1165px;width:13px;height:14px;background:#222222;"></div>
<svg style="position:absolute;left:359px;top:1166px;" width="13" height="13" viewBox="0 0 13 13"><circle cx="6.5" cy="6.5" r="5.6" fill="#c4c4c4"/><path d="M9.6 3.4L3.4 9.6A4.4 4.4 0 0 1 9.6 3.4Z" fill="#262626"/></svg>
<div style="left:374px;top:1165px;width:13px;height:14px;background:#222222;"></div>
<svg style="position:absolute;left:406px;top:1164px;" width="14" height="15" viewBox="0 0 14 15"><path d="M12 2.6V7.5A5 5 0 0 1 2 7.5A3.5 3.5 0 0 1 9 7.5A2.5 2.5 0 0 1 4 7.5A1.25 1.25 0 0 1 6.5 7.5" fill="none" stroke="#b4b4b4" stroke-width="1.15"/></svg>
<div style="left:425px;top:1165px;width:89px;height:14px;background:#1c1c1c;"></div>
<div class="t" style="left:433px;top:1166.69px;font-size:11px;line-height:11px;color:#c4c4c4;font-weight:normal;">None</div>
<svg style="position:absolute;left:501px;top:1169px;" width="10" height="6" viewBox="0 0 10 6"><path d="M1 1L5.0 5L9 1" fill="none" stroke="#b8b8b8" stroke-width="1.1"/></svg>
<div style="left:542px;top:1164px;width:1992px;height:16px;background:#3c3c3c;"></div>
<div style="left:542px;top:1180px;width:1992px;height:1px;background:#242326;"></div>
<div style="left:2534px;top:1164px;width:6px;height:17px;background:#333333;"></div>
<div style="left:542px;top:1164px;width:1532px;height:16px;background:#767385;border-top:1px solid #84818f;"></div>
<div style="left:2px;top:1181px;width:532px;height:16px;background:#2f2f2f;"></div>
<div style="left:2px;top:1197px;width:532px;height:1px;background:#262626;"></div>
<div style="left:6px;top:1182px;width:13px;height:14px;background:#272727;"></div>
<svg style="position:absolute;left:7px;top:1185px;" width="13" height="9" viewBox="0 0 13 9"><path d="M0.5 4.5C3 0 10 0 12.5 4.5C10 9 3 9 0.5 4.5Z" fill="#c4c4c4"/><circle cx="6.5" cy="4.5" r="2.2" fill="#232323"/><circle cx="6.5" cy="4.5" r="1" fill="#555"/></svg>
<div style="left:21px;top:1182px;width:13px;height:14px;background:#222222;"></div>
<div style="left:36px;top:1182px;width:13px;height:14px;background:#222222;"></div>
<div style="left:51px;top:1182px;width:13px;height:14px;background:#222222;"></div>
<svg style="position:absolute;left:75px;top:1185px;" width="6" height="9" viewBox="0 0 6 9"><path d="M1 1L5 4.5L1 8" fill="none" stroke="#a8a8a8" stroke-width="1.1"/></svg>
<div style="left:87px;top:1183px;width:12px;height:12px;background:#a89a7c;"></div>
<div class="t" style="left:108.5px;top:1183.69px;font-size:11px;line-height:11px;color:#c0c0c0;font-weight:normal;">9</div>
<svg style="position:absolute;left:136px;top:1183px;" width="16" height="13" viewBox="0 0 16 13"><rect x="0" y="0" width="16" height="13" fill="#c8c8c8"/><path d="M1.5 1.5V11.5M14.5 1.5V11.5" stroke="#333" stroke-width="1" stroke-dasharray="1 1.3"/><rect x="3" y="1" width="10" height="9.5" fill="#d8d8d8"/><rect x="3" y="11.2" width="10" height="0.8" fill="#444"/><rect x="8" y="3" width="4" height="4" fill="#d04a3a"/><circle cx="6" cy="4" r="2" fill="#3a80d0"/><path d="M4 10L7 5.5L10 10Z" fill="#2aa040"/></svg>
<svg style="position:absolute;left:154px;top:1183px;" width="14" height="14" viewBox="0 0 14 14"><rect x="0.75" y="0.75" width="12.5" height="12.5" rx="1" fill="#6a6a6a" stroke="#a8a8a8" stroke-width="1.5"/><circle cx="7" cy="7" r="3" fill="#222"/><path d="M2.5 4.5V2.5H4.5M9.5 2.5H11.5V4.5M11.5 9.5V11.5H9.5M4.5 11.5H2.5V9.5" fill="none" stroke="#222" stroke-width="1"/></svg>
<div class="t" style="left:173px;top:1183.69px;font-size:11px;line-height:11px;color:#c4c4c4;font-weight:normal;letter-spacing:0.335px;">My Hero...omp 1</div>
<div style="left:269px;top:1182px;width:13px;height:14px;background:#272727;"></div>
<svg style="position:absolute;left:269px;top:1183px;" width="13" height="12" viewBox="0 0 13 12"><path d="M2 6A4.5 4.5 0 0 1 11 6Z" fill="#c0c0c0"/><circle cx="4.7" cy="4.3" r="0.9" fill="#232323"/><circle cx="8.3" cy="4.3" r="0.9" fill="#232323"/><rect x="5.8" y="5.5" width="1.4" height="6" fill="#c0c0c0"/><rect x="0" y="7.5" width="13" height="1" fill="#c0c0c0"/></svg>
<div style="left:284px;top:1182px;width:13px;height:14px;background:#222222;"></div>
<div style="left:300px;top:1182px;width:12px;height:14px;background:#222222;"></div>
<svg style="position:absolute;left:300px;top:1183px;" width="12" height="12" viewBox="0 0 12 12"><path d="M1.5 11L10.5 1" stroke="#b8b8b8" stroke-width="1.3"/></svg>
<div style="left:314px;top:1182px;width:13px;height:14px;background:#222222;"></div>
<div class="t" style="left:315px;top:1182.42px;font-size:12.5px;line-height:12.5px;color:#b8b8b8;font-weight:normal;font-family:'Liberation Serif',serif;font-style:italic;">fx</div>
<div style="left:344px;top:1182px;width:13px;height:14px;background:#222222;"></div>
<svg style="position:absolute;left:343px;top:1182px;" width="15" height="14" viewBox="0 0 15 14"><circle cx="9" cy="5.5" r="4.5" fill="#b8b8b8"/><circle cx="6" cy="9" r="4" fill="none" stroke="#b8b8b8" stroke-width="1"/><circle cx="5" cy="10" r="3" fill="none" stroke="#b8b8b8" stroke-width="0.8"/></svg>
<div style="left:359px;top:1182px;width:13px;height:14px;background:#222222;"></div>
<div style="left:374px;top:1182px;width:13px;height:14px;background:#222222;"></div>
<svg style="position:absolute;left:406px;top:1181px;" width="14" height="15" viewBox="0 0 14 15"><path d="M12 2.6V7.5A5 5 0 0 1 2 7.5A3.5 3.5 0 0 1 9 7.5A2.5 2.5 0 0 1 4 7.5A1.25 1.25 0 0 1 6.5 7.5" fill="none" stroke="#b4b4b4" stroke-width="1.15"/></svg>
<div style="left:425px;top:1182px;width:89px;height:14px;background:#1c1c1c;"></div>
<div class="t" style="left:433px;top:1183.69px;font-size:11px;line-height:11px;color:#c4c4c4;font-weight:normal;">None</div>
<svg style="position:absolute;left:501px;top:1186px;" width="10" height="6" viewBox="0 0 10 6"><path d="M1 1L5.0 5L9 1" fill="none" stroke="#b8b8b8" stroke-width="1.1"/></svg>
<div style="left:542px;top:1181px;width:1992px;height:16px;background:#3c3c3c;"></div>
<div style="left:542px;top:1197px;width:1992px;height:1px;background:#242326;"></div>
<div style="left:2534px;top:1181px;width:6px;height:17px;background:#333333;"></div>
<div style="left:542px;top:1181px;width:1532px;height:16px;background:#726a59;border-top:1px solid #80786a;"></div>
<svg style="position:absolute;left:543px;top:1182px;" width="5" height="5" viewBox="0 0 5 5"><path d="M0 0H5L0 5Z" fill="#3a3530"/></svg>
<div style="left:2px;top:1198px;width:532px;height:16px;background:#2f2f2f;"></div>
<div style="left:2px;top:1214px;width:532px;height:1px;background:#262626;"></div>
<div style="left:6px;top:1199px;width:13px;height:14px;background:#222222;"></div>
<div style="left:36px;top:1199px;width:13px;height:14px;background:#222222;"></div>
<div style="left:51px;top:1199px;width:13px;height:14px;background:#222222;"></div>
<svg style="position:absolute;left:75px;top:1202px;" width="6" height="9" viewBox="0 0 6 9"><path d="M1 1L5 4.5L1 8" fill="none" stroke="#a8a8a8" stroke-width="1.1"/></svg>
<div style="left:87px;top:1200px;width:12px;height:12px;background:#cc3a3a;"></div>
<div class="t" style="left:108.5px;top:1200.69px;font-size:11px;line-height:11px;color:#c0c0c0;font-weight:normal;">10</div>
<div style="left:137px;top:1199px;width:14px;height:14px;background:#000000;"></div>
<svg style="position:absolute;left:154px;top:1200px;" width="14" height="14" viewBox="0 0 14 14"><rect x="0.75" y="0.75" width="12.5" height="12.5" rx="1" fill="#2a2a2a" stroke="#a8a8a8" stroke-width="1.5"/><circle cx="7" cy="7" r="3" fill="#cfcfcf"/></svg>
<div class="t" style="left:173px;top:1200.69px;font-size:11px;line-height:11px;color:#c4c4c4;font-weight:normal;letter-spacing:0.034px;">Black Solid 1</div>
<div style="left:269px;top:1199px;width:13px;height:14px;background:#272727;"></div>
<svg style="position:absolute;left:269px;top:1200px;" width="13" height="12" viewBox="0 0 13 12"><path d="M2 6A4.5 4.5 0 0 1 11 6Z" fill="#c0c0c0"/><circle cx="4.7" cy="4.3" r="0.9" fill="#232323"/><circle cx="8.3" cy="4.3" r="0.9" fill="#232323"/><rect x="5.8" y="5.5" width="1.4" height="6" fill="#c0c0c0"/><rect x="0" y="7.5" width="13" height="1" fill="#c0c0c0"/></svg>
<div style="left:284px;top:1199px;width:13px;height:14px;background:#222222;"></div>
<div style="left:300px;top:1199px;width:12px;height:14px;background:#222222;"></div>
<svg style="position:absolute;left:300px;top:1200px;" width="12" height="12" viewBox="0 0 12 12"><path d="M1.5 11L10.5 1" stroke="#b8b8b8" stroke-width="1.3"/></svg>
<div style="left:314px;top:1199px;width:13px;height:14px;background:#222222;"></div>
<div class="t" style="left:315px;top:1199.42px;font-size:12.5px;line-height:12.5px;color:#b8b8b8;font-weight:normal;font-family:'Liberation Serif',serif;font-style:italic;">fx</div>
<div style="left:344px;top:1199px;width:13px;height:14px;background:#222222;"></div>
<div style="left:359px;top:1199px;width:13px;height:14px;background:#222222;"></div>
<div style="left:374px;top:1199px;width:13px;height:14px;background:#222222;"></div>
<svg style="position:absolute;left:406px;top:1198px;" width="14" height="15" viewBox="0 0 14 15"><path d="M12 2.6V7.5A5 5 0 0 1 2 7.5A3.5 3.5 0 0 1 9 7.5A2.5 2.5 0 0 1 4 7.5A1.25 1.25 0 0 1 6.5 7.5" fill="none" stroke="#b4b4b4" stroke-width="1.15"/></svg>
<div style="left:425px;top:1199px;width:89px;height:14px;background:#1c1c1c;"></div>
<div class="t" style="left:433px;top:1200.69px;font-size:11px;line-height:11px;color:#c4c4c4;font-weight:normal;">None</div>
<svg style="position:absolute;left:501px;top:1203px;" width="10" height="6" viewBox="0 0 10 6"><path d="M1 1L5.0 5L9 1" fill="none" stroke="#b8b8b8" stroke-width="1.1"/></svg>
<div style="left:542px;top:1198px;width:1992px;height:16px;background:#3c3c3c;"></div>
<div style="left:542px;top:1214px;width:1992px;height:1px;background:#242326;"></div>
<div style="left:2534px;top:1198px;width:6px;height:17px;background:#333333;"></div>
<div style="left:542px;top:1198px;width:1532px;height:16px;background:#7a3a3c;border-top:1px solid #874a4c;"></div>
<div style="left:542px;top:1215px;width:1992px;height:205px;background:#313131;"></div>
<div style="left:2534px;top:1215px;width:6px;height:205px;background:#2a2a2a;"></div>
<div style="left:2055px;top:1045px;width:39px;height:376px;background:rgba(255,255,255,0.07);"></div>
<div style="left:2073px;top:996px;width:2px;height:8px;background:#6fb8e8;"></div>
<svg style="position:absolute;left:2068px;top:1009px;" width="13" height="15" viewBox="0 0 13 15"><path d="M0 0H12V8L6 14L0 8Z" fill="#4dbbf7"/><rect x="4" y="6" width="4" height="1.2" fill="#0b2a40"/><rect x="5.4" y="6" width="1.2" height="8" fill="#0b2a40"/></svg>
<svg style="position:absolute;left:2068px;top:1031px;" width="13" height="9" viewBox="0 0 13 9"><path d="M0 9V4.5L6 0L12 4.5V9Z" fill="#cfcfcf"/></svg>
<div style="left:2073px;top:1024px;width:2px;height:397px;background:#6ab4e6;"></div>
<div style="left:2px;top:1421px;width:2556px;height:17px;background:#232323;"></div>
<div style="left:2px;top:1421px;width:640px;height:1px;background:#2c2c2c;"></div>
<div style="left:8px;top:1423px;width:17px;height:14px;background:#1b1b1b;"></div>
<svg style="position:absolute;left:9px;top:1423px;" width="14" height="14" viewBox="0 0 14 14"><rect x="1" y="1" width="8" height="8" fill="none" stroke="#3fa1ee" stroke-width="1.2"/><rect x="5" y="5" width="8" height="8" fill="#1b1b1b" stroke="#3fa1ee" stroke-width="1.2"/><rect x="7.5" y="8" width="3" height="3" fill="#3fa1ee"/></svg>
<svg style="position:absolute;left:28px;top:1423px;" width="13" height="13" viewBox="0 0 13 13"><circle cx="5" cy="5" r="4" fill="none" stroke="#b4b4b4" stroke-width="1.2"/><rect x="5" y="5" width="7" height="7" fill="#232323" stroke="#b4b4b4" stroke-width="1.2"/></svg>
<svg style="position:absolute;left:47px;top:1423px;" width="11" height="13" viewBox="0 0 11 13"><path d="M1 6.5L4 2V11ZM10 6.5L7 2V11Z" fill="#b4b4b4"/><rect x="5" y="0" width="1" height="13" fill="#b4b4b4"/></svg>
<svg style="position:absolute;left:65px;top:1423px;" width="14" height="12" viewBox="0 0 14 12"><circle cx="5" cy="5" r="4" fill="#b4b4b4"/><path d="M1 11H10V8H1Z" fill="#b4b4b4"/><path d="M10 3H13M11 3V9" stroke="#b4b4b4" stroke-width="1.2"/></svg>
<div class="t" style="left:107px;top:1424.69px;font-size:11px;line-height:11px;color:#9a9a9a;font-weight:normal;">Frame Render Time:</div>
<div class="t" style="left:213px;top:1424.69px;font-size:11px;line-height:11px;color:#5fd08a;font-weight:normal;">0ms</div>
<div style="left:266px;top:1423px;width:134px;height:14px;background:#262626;border:1px solid #2e2e2e;"></div>
<div class="t" style="left:272px;top:1424.69px;font-size:11px;line-height:11px;color:#9a9a9a;font-weight:normal;">Toggle Switches / Modes</div>
<svg style="position:absolute;left:540px;top:1425px;" width="10" height="6" viewBox="0 0 10 6"><path d="M0 6L3 2L5 4L7 1L10 6Z" fill="#b4b4b4"/></svg>
<svg style="position:absolute;left:560px;top:1424px;" width="50" height="12" viewBox="0 0 50 12"><line x1="12" y1="6" x2="48" y2="6" stroke="#3a3a3a" stroke-width="2"/><circle cx="6" cy="6" r="4.3" fill="#232323" stroke="#a0a0a0" stroke-width="1.8"/></svg>
<svg style="position:absolute;left:620px;top:1423px;" width="17" height="9" viewBox="0 0 17 9"><path d="M0 9L4 4L6 6L10 0L17 9Z" fill="#b4b4b4"/></svg>
</body></html>
